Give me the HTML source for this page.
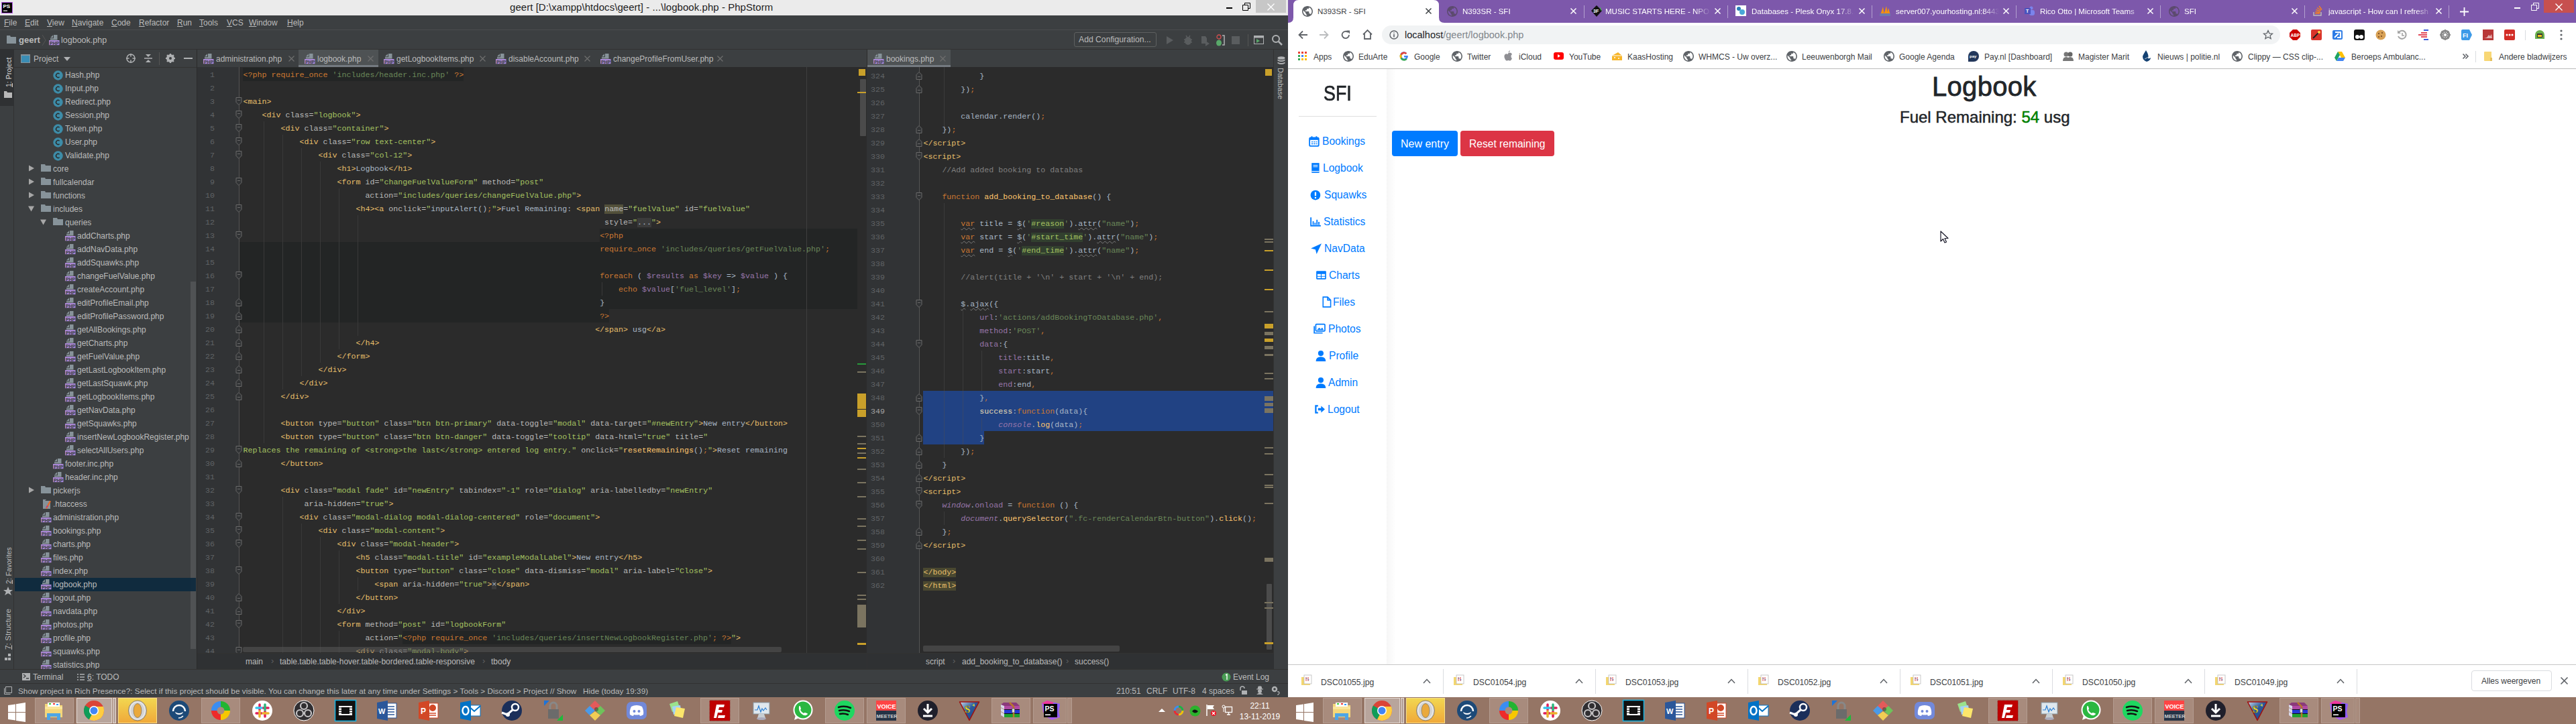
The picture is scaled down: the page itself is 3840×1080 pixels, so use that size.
<!DOCTYPE html><html><head><meta charset="utf-8"><style>
*{margin:0;padding:0}
html,body{width:3840px;height:1080px;overflow:hidden;background:#2b2b2b}
body{position:relative;font-family:"Liberation Sans",sans-serif;font-size:12px}
div{position:absolute}
.t{white-space:pre;line-height:16px}
.tr{white-space:pre;line-height:20px;color:#bbbbbb;font-size:12px}
.ic{position:absolute;overflow:visible}
.lno{font-family:"Liberation Mono",monospace;font-size:11.67px;line-height:20px;color:#606366;text-align:right;white-space:pre}
.cl{font-family:"Liberation Mono",monospace;font-size:11.67px;line-height:20px;color:#a9b7c6;white-space:pre}
.cl span,.cl i{line-height:20px}
.wv{text-decoration:underline wavy #7a7a7a;text-decoration-thickness:1px;text-underline-offset:2px}
.vt{transform-origin:0 0;transform:rotate(-90deg);white-space:pre;line-height:18px;font-size:12px}
.vt2{transform-origin:0 0;transform:rotate(90deg) translate(0,-16px);white-space:pre;line-height:16px;font-size:12px}
u{text-decoration:underline;text-underline-offset:1px}
</style></head><body><svg width="0" height="0" style="position:absolute">
<defs>
<symbol id="phpI" viewBox="0 0 16 16"><path d="M2 4.2L6 0.2V4.2z" fill="#87939a"/><path d="M7 0h5.5v7.5H2V5.2h5z" fill="#87939a"/><rect x="0" y="8" width="15.5" height="7.2" fill="#a987d6"/><text x="0.9" y="14.6" font-family="Liberation Sans" font-weight="bold" font-size="7" fill="#3c3f41" letter-spacing="-0.1">PHP</text></symbol>
<symbol id="clsI" viewBox="0 0 15 15"><circle cx="7.5" cy="7.5" r="7.2" fill="#3d8ca8"/><path d="M9.6 5.3a3 3 0 1 0 0 4.4" fill="none" stroke="#2b2b2b" stroke-width="1.4"/></symbol>
<symbol id="fldI" viewBox="0 0 15 12"><path d="M0 0h6l1 2h8v9H0z" fill="#87939a"/></symbol>
<symbol id="globeI" viewBox="2 2 20 20"><path d="M12 2C6.48 2 2 6.48 2 12s4.48 10 10 10 10-4.48 10-10S17.52 2 12 2zm-1 17.930c-3.950-.490-7-3.850-7-7.930 0-.620.080-1.210.210-1.790L9 15v1c0 1.100.900 2 2 2v1.930zm6.900-2.540c-.260-.810-1-1.390-1.900-1.390h-1v-3c0-.550-.450-1-1-1H8v-2h2c.550 0 1-.450 1-1V7h2c1.100 0 2-.900 2-2v-.410c2.930 1.190 5 4.060 5 7.410 0 2.080-.800 3.970-2.100 5.390z"/></symbol>
</defs></svg><div style="left:0px;top:0px;width:1920px;height:23px;background:#ebebeb"></div><svg class="ic" style="left:2px;top:3px" width="17" height="17"><rect x="0.5" y="0.5" width="16" height="16" fill="#000" stroke="#b15be3"/><text x="2.5" y="9" font-family="Liberation Sans" font-weight="bold" font-size="8" fill="#fff">PS</text><rect x="3" y="12.5" width="6" height="1.2" fill="#fff"/></svg><div class="t" style="left:760px;top:3px;font-size:15px;color:#1e1e1e;letter-spacing:0.05px">geert [D:\xampp\htdocs\geert] - ...\logbook.php - PhpStorm</div><div style="left:1828px;top:11px;width:9px;height:2px;background:#000"></div><svg class="ic" style="left:1852px;top:4px" width="12" height="12"><path d="M0.5 3.5h8v8h-8z M3.5 3.5v-3h8v8h-3" fill="none" stroke="#000"/></svg><div style="left:1872px;top:0px;width:45px;height:19px;background:#c7c7c7"></div><svg class="ic" style="left:1889px;top:5px" width="11" height="11"><path d="M0.5 0.5l10 10M10.5 0.5l-10 10" stroke="#fff" stroke-width="1.3"/></svg><div style="left:0px;top:23px;width:1920px;height:50px;background:#3c3f41"></div><div class="t" style="left:6px;top:26px;color:#bbbbbb"><u>F</u>ile</div><div class="t" style="left:37px;top:26px;color:#bbbbbb"><u>E</u>dit</div><div class="t" style="left:70px;top:26px;color:#bbbbbb"><u>V</u>iew</div><div class="t" style="left:107px;top:26px;color:#bbbbbb"><u>N</u>avigate</div><div class="t" style="left:166px;top:26px;color:#bbbbbb"><u>C</u>ode</div><div class="t" style="left:207px;top:26px;color:#bbbbbb"><u>R</u>efactor</div><div class="t" style="left:264px;top:26px;color:#bbbbbb"><u>R</u>un</div><div class="t" style="left:297px;top:26px;color:#bbbbbb"><u>T</u>ools</div><div class="t" style="left:338px;top:26px;color:#bbbbbb"><u>V</u>CS</div><div class="t" style="left:371px;top:26px;color:#bbbbbb"><u>W</u>indow</div><div class="t" style="left:428px;top:26px;color:#bbbbbb"><u>H</u>elp</div><div style="left:0px;top:44px;width:1920px;height:1px;background:#4b4d4f"></div><svg class="ic" style="left:10px;top:53px" width="14" height="12"><path d="M0 0h5l1 2h8v10H0z" fill="#87939a"/></svg><div class="t" style="left:28px;top:52px;color:#bbbbbb;font-weight:bold;font-size:13px">geert</div><svg class="ic" style="left:62px;top:51px" width="8" height="18"><path d="M1 1l5 8-5 8" fill="none" stroke="#555" /></svg><svg class="ic" style="left:73px;top:52px" width="16" height="16"><use href="#phpI"/></svg><div class="t" style="left:91px;top:52px;color:#bbbbbb;font-size:12.5px">logbook.php</div><div style="left:1601px;top:48px;width:123px;height:22px;border:1px solid #5e6060;border-radius:3px;box-sizing:border-box"></div><div class="t" style="left:1608px;top:51px;color:#bbbbbb;font-size:12.2px">Add Configuration...</div><svg class="ic" style="left:1737px;top:51px" width="200" height="18"><path d="M2 3l10 6-10 6z" fill="#5a5d5f"/><g transform="translate(28,0)"><ellipse cx="6" cy="10" rx="5" ry="6" fill="#5a5d5f"/><path d="M0 8h12M0 12h12M3 2l2 3M9 2l-2 3" stroke="#5a5d5f" stroke-width="1.5"/></g><g transform="translate(52,0)"><path d="M2 3h6l2 3v8H2z" fill="#5a5d5f"/><path d="M8 10l6 4-6 4z" fill="#5a5d5f"/></g><g transform="translate(75,0)"><circle cx="5" cy="4" r="3" fill="none" stroke="#d64f4f" stroke-width="1.3"/><ellipse cx="5" cy="13" rx="4" ry="4.5" fill="#59a869"/><path d="M10 2h3v14h-3" fill="none" stroke="#afb1b3" stroke-width="1.5"/></g><rect x="99" y="3" width="12" height="12" fill="#5a5d5f"/><rect x="123" y="0" width="1" height="18" fill="#555"/><g transform="translate(132,2)"><rect x="0.5" y="0.5" width="14" height="12" fill="none" stroke="#afb1b3"/><rect x="1" y="1" width="13" height="2.5" fill="#afb1b3"/><path d="M4 5l5 3-5 3z" fill="#59a869"/></g><g transform="translate(159,1)"><circle cx="6" cy="6" r="5" fill="none" stroke="#afb1b3" stroke-width="2"/><path d="M10 10l5 5" stroke="#afb1b3" stroke-width="2.5"/></g></svg><div style="left:0px;top:73px;width:1920px;height:1px;background:#323232"></div><div style="left:0px;top:74px;width:21px;height:924px;background:#3c3f41;border-right:1px solid #323232;box-sizing:border-box"></div><div style="left:0px;top:74px;width:21px;height:84px;background:#2f3133"></div><div class="t vt" style="left:4px;top:130px;color:#d6d6d6;font-size:10.5px"><u>1</u>: Project</div><svg class="ic" style="left:6px;top:136px" width="12" height="10"><path d="M0 0h4l1 2h7v8H0z" fill="#b8b8b8"/></svg><div class="t vt" style="left:4px;top:871px;color:#bbbbbb;font-size:10.5px"><u>2</u>: Favorites</div><svg class="ic" style="left:5px;top:875px" width="14" height="14"><path d="M7 0l2 5h5l-4 3 2 5-5-3-5 3 2-5-4-3h5z" fill="#afb1b3"/></svg><div class="t vt" style="left:3px;top:969px;color:#bbbbbb;font-size:11.8px"><u>7</u>: Structure</div><svg class="ic" style="left:7px;top:975px" width="12" height="12"><rect x="5" y="0" width="4" height="4" fill="#afb1b3"/><rect x="0" y="6" width="4" height="4" fill="#afb1b3"/><rect x="5" y="6" width="4" height="4" fill="#afb1b3"/></svg><div style="left:21px;top:74px;width:272px;height:924px;background:#3c3f41"></div><div style="left:21px;top:100px;width:272px;height:1px;background:#323232"></div><svg class="ic" style="left:31px;top:81px" width="15" height="14"><rect x="0.5" y="0.5" width="13" height="12" fill="#3a8db5" stroke="#87939a"/><rect x="0" y="0" width="14" height="2" fill="#87939a"/></svg><div class="t" style="left:50px;top:80px;color:#bbbbbb;font-size:12px">Project</div><svg class="ic" style="left:95px;top:84px" width="10" height="8"><path d="M0 1h10l-5 6z" fill="#afb1b3"/></svg><svg class="ic" style="left:187px;top:79px" width="16" height="16"><circle cx="8" cy="8" r="6" fill="none" stroke="#afb1b3" stroke-width="1.5"/><path d="M8 1v14M1 8h14" stroke="#afb1b3" stroke-width="1.5"/><circle cx="8" cy="8" r="2.5" fill="#3c3f41"/></svg><svg class="ic" style="left:214px;top:80px" width="14" height="14"><path d="M1 7h12" stroke="#afb1b3" stroke-width="1.5"/><path d="M3 1h8l-4 4z M3 13h8l-4-4z" fill="#afb1b3"/></svg><div style="left:237px;top:78px;width:1px;height:19px;background:#555"></div><svg class="ic" style="left:247px;top:80px" width="14" height="14"><circle cx="7" cy="7" r="4.5" fill="none" stroke="#afb1b3" stroke-width="3"/><path d="M7 0v14M0 7h14M2 2l10 10M12 2l-10 10" stroke="#afb1b3" stroke-width="2.2"/><circle cx="7" cy="7" r="2" fill="#3c3f41"/></svg><div style="left:274px;top:86px;width:13px;height:2px;background:#afb1b3"></div><div style="left:284px;top:420px;width:8px;height:548px;background:#505254"></div><div style="left:21px;top:101px;width:272px;height:897px;overflow:hidden"><div style="left:-21px;top:-101px;width:300px;height:1000px"><svg class="ic" style="left:79px;top:105px" width="15" height="15"><use href="#clsI"/></svg><div class="tr" style="left:97px;top:102px;">Hash.php</div><svg class="ic" style="left:79px;top:125px" width="15" height="15"><use href="#clsI"/></svg><div class="tr" style="left:97px;top:122px;">Input.php</div><svg class="ic" style="left:79px;top:145px" width="15" height="15"><use href="#clsI"/></svg><div class="tr" style="left:97px;top:142px;">Redirect.php</div><svg class="ic" style="left:79px;top:165px" width="15" height="15"><use href="#clsI"/></svg><div class="tr" style="left:97px;top:162px;">Session.php</div><svg class="ic" style="left:79px;top:185px" width="15" height="15"><use href="#clsI"/></svg><div class="tr" style="left:97px;top:182px;">Token.php</div><svg class="ic" style="left:79px;top:205px" width="15" height="15"><use href="#clsI"/></svg><div class="tr" style="left:97px;top:202px;">User.php</div><svg class="ic" style="left:79px;top:225px" width="15" height="15"><use href="#clsI"/></svg><div class="tr" style="left:97px;top:222px;">Validate.php</div><svg class="ic" style="left:42px;top:246px" width="10" height="10"><path d="M1 0.5v9l8-4.5z" fill="#a7a7a7"/></svg><svg class="ic" style="left:61px;top:245px" width="15" height="12"><use href="#fldI"/></svg><div class="tr" style="left:79px;top:242px;">core</div><svg class="ic" style="left:42px;top:266px" width="10" height="10"><path d="M1 0.5v9l8-4.5z" fill="#a7a7a7"/></svg><svg class="ic" style="left:61px;top:265px" width="15" height="12"><use href="#fldI"/></svg><div class="tr" style="left:79px;top:262px;">fullcalendar</div><svg class="ic" style="left:42px;top:286px" width="10" height="10"><path d="M1 0.5v9l8-4.5z" fill="#a7a7a7"/></svg><svg class="ic" style="left:61px;top:285px" width="15" height="12"><use href="#fldI"/></svg><div class="tr" style="left:79px;top:282px;">functions</div><svg class="ic" style="left:42px;top:306px" width="10" height="10"><path d="M0 1.5h9l-4.5 8z" fill="#a7a7a7"/></svg><svg class="ic" style="left:61px;top:305px" width="15" height="12"><use href="#fldI"/></svg><div class="tr" style="left:79px;top:302px;">includes</div><svg class="ic" style="left:60px;top:326px" width="10" height="10"><path d="M0 1.5h9l-4.5 8z" fill="#a7a7a7"/></svg><svg class="ic" style="left:79px;top:325px" width="15" height="12"><use href="#fldI"/></svg><div class="tr" style="left:97px;top:322px;">queries</div><svg class="ic" style="left:97px;top:344px" width="16" height="16"><use href="#phpI"/></svg><div class="tr" style="left:115px;top:342px;">addCharts.php</div><svg class="ic" style="left:97px;top:364px" width="16" height="16"><use href="#phpI"/></svg><div class="tr" style="left:115px;top:362px;">addNavData.php</div><svg class="ic" style="left:97px;top:384px" width="16" height="16"><use href="#phpI"/></svg><div class="tr" style="left:115px;top:382px;">addSquawks.php</div><svg class="ic" style="left:97px;top:404px" width="16" height="16"><use href="#phpI"/></svg><div class="tr" style="left:115px;top:402px;">changeFuelValue.php</div><svg class="ic" style="left:97px;top:424px" width="16" height="16"><use href="#phpI"/></svg><div class="tr" style="left:115px;top:422px;">createAccount.php</div><svg class="ic" style="left:97px;top:444px" width="16" height="16"><use href="#phpI"/></svg><div class="tr" style="left:115px;top:442px;">editProfileEmail.php</div><svg class="ic" style="left:97px;top:464px" width="16" height="16"><use href="#phpI"/></svg><div class="tr" style="left:115px;top:462px;">editProfilePassword.php</div><svg class="ic" style="left:97px;top:484px" width="16" height="16"><use href="#phpI"/></svg><div class="tr" style="left:115px;top:482px;">getAllBookings.php</div><svg class="ic" style="left:97px;top:504px" width="16" height="16"><use href="#phpI"/></svg><div class="tr" style="left:115px;top:502px;">getCharts.php</div><svg class="ic" style="left:97px;top:524px" width="16" height="16"><use href="#phpI"/></svg><div class="tr" style="left:115px;top:522px;">getFuelValue.php</div><svg class="ic" style="left:97px;top:544px" width="16" height="16"><use href="#phpI"/></svg><div class="tr" style="left:115px;top:542px;">getLastLogbookItem.php</div><svg class="ic" style="left:97px;top:564px" width="16" height="16"><use href="#phpI"/></svg><div class="tr" style="left:115px;top:562px;">getLastSquawk.php</div><svg class="ic" style="left:97px;top:584px" width="16" height="16"><use href="#phpI"/></svg><div class="tr" style="left:115px;top:582px;">getLogbookItems.php</div><svg class="ic" style="left:97px;top:604px" width="16" height="16"><use href="#phpI"/></svg><div class="tr" style="left:115px;top:602px;">getNavData.php</div><svg class="ic" style="left:97px;top:624px" width="16" height="16"><use href="#phpI"/></svg><div class="tr" style="left:115px;top:622px;">getSquawks.php</div><svg class="ic" style="left:97px;top:644px" width="16" height="16"><use href="#phpI"/></svg><div class="tr" style="left:115px;top:642px;">insertNewLogbookRegister.php</div><svg class="ic" style="left:97px;top:664px" width="16" height="16"><use href="#phpI"/></svg><div class="tr" style="left:115px;top:662px;">selectAllUsers.php</div><svg class="ic" style="left:79px;top:684px" width="16" height="16"><use href="#phpI"/></svg><div class="tr" style="left:97px;top:682px;">footer.inc.php</div><svg class="ic" style="left:79px;top:704px" width="16" height="16"><use href="#phpI"/></svg><div class="tr" style="left:97px;top:702px;">header.inc.php</div><svg class="ic" style="left:42px;top:726px" width="10" height="10"><path d="M1 0.5v9l8-4.5z" fill="#a7a7a7"/></svg><svg class="ic" style="left:61px;top:725px" width="15" height="12"><use href="#fldI"/></svg><div class="tr" style="left:79px;top:722px;">pickerjs</div><svg class="ic" style="left:62px;top:744px" width="15" height="16"><path d="M2 3h11v12H2z" fill="#87939a"/><path d="M2 1h5l-5 5z" fill="#87939a"/><path d="M6 14l6-11 2 1-6 11z" fill="#e86a2a"/><path d="M6 14l2-4 2 1z" fill="#a53a9a"/></svg><div class="tr" style="left:79px;top:742px;">.htaccess</div><svg class="ic" style="left:61px;top:764px" width="16" height="16"><use href="#phpI"/></svg><div class="tr" style="left:79px;top:762px;">administration.php</div><svg class="ic" style="left:61px;top:784px" width="16" height="16"><use href="#phpI"/></svg><div class="tr" style="left:79px;top:782px;">bookings.php</div><svg class="ic" style="left:61px;top:804px" width="16" height="16"><use href="#phpI"/></svg><div class="tr" style="left:79px;top:802px;">charts.php</div><svg class="ic" style="left:61px;top:824px" width="16" height="16"><use href="#phpI"/></svg><div class="tr" style="left:79px;top:822px;">files.php</div><svg class="ic" style="left:61px;top:844px" width="16" height="16"><use href="#phpI"/></svg><div class="tr" style="left:79px;top:842px;">index.php</div><div style="left:22px;top:862px;width:270px;height:20px;background:rgba(13,41,62,0.92)"></div><svg class="ic" style="left:61px;top:864px" width="16" height="16"><use href="#phpI"/></svg><div class="tr" style="left:79px;top:862px;">logbook.php</div><svg class="ic" style="left:61px;top:884px" width="16" height="16"><use href="#phpI"/></svg><div class="tr" style="left:79px;top:882px;">logout.php</div><svg class="ic" style="left:61px;top:904px" width="16" height="16"><use href="#phpI"/></svg><div class="tr" style="left:79px;top:902px;">navdata.php</div><svg class="ic" style="left:61px;top:924px" width="16" height="16"><use href="#phpI"/></svg><div class="tr" style="left:79px;top:922px;">photos.php</div><svg class="ic" style="left:61px;top:944px" width="16" height="16"><use href="#phpI"/></svg><div class="tr" style="left:79px;top:942px;">profile.php</div><svg class="ic" style="left:61px;top:964px" width="16" height="16"><use href="#phpI"/></svg><div class="tr" style="left:79px;top:962px;">squawks.php</div><svg class="ic" style="left:61px;top:984px" width="16" height="16"><use href="#phpI"/></svg><div class="tr" style="left:79px;top:982px;">statistics.php</div></div></div><div style="left:293px;top:74px;width:1px;height:924px;background:#2b2b2b"></div><div style="left:294px;top:74px;width:998px;height:26px;background:#3c3f41"></div><div style="left:445px;top:74px;width:119px;height:26px;background:#4e5254"></div><div style="left:445px;top:97px;width:119px;height:3px;background:#747a80"></div><svg class="ic" style="left:303px;top:80px" width="16" height="16"><use href="#phpI"/></svg><div class="t" style="left:322px;top:80px;color:#bbbbbb">administration.php</div><svg class="ic" style="left:430px;top:83px" width="9" height="9"><path d="M0.5 0.5l8 8M8.5 0.5l-8 8" stroke="#6e6e6e" stroke-width="1.2"/></svg><svg class="ic" style="left:454px;top:80px" width="16" height="16"><use href="#phpI"/></svg><div class="t" style="left:473px;top:80px;color:#bbbbbb">logbook.php</div><svg class="ic" style="left:548px;top:83px" width="9" height="9"><path d="M0.5 0.5l8 8M8.5 0.5l-8 8" stroke="#6e6e6e" stroke-width="1.2"/></svg><svg class="ic" style="left:572px;top:80px" width="16" height="16"><use href="#phpI"/></svg><div class="t" style="left:591px;top:80px;color:#bbbbbb">getLogbookItems.php</div><svg class="ic" style="left:715px;top:83px" width="9" height="9"><path d="M0.5 0.5l8 8M8.5 0.5l-8 8" stroke="#6e6e6e" stroke-width="1.2"/></svg><svg class="ic" style="left:739px;top:80px" width="16" height="16"><use href="#phpI"/></svg><div class="t" style="left:758px;top:80px;color:#bbbbbb">disableAccount.php</div><svg class="ic" style="left:871px;top:83px" width="9" height="9"><path d="M0.5 0.5l8 8M8.5 0.5l-8 8" stroke="#6e6e6e" stroke-width="1.2"/></svg><svg class="ic" style="left:895px;top:80px" width="16" height="16"><use href="#phpI"/></svg><div class="t" style="left:914px;top:80px;color:#bbbbbb">changeProfileFromUser.php</div><svg class="ic" style="left:1069px;top:83px" width="9" height="9"><path d="M0.5 0.5l8 8M8.5 0.5l-8 8" stroke="#6e6e6e" stroke-width="1.2"/></svg><div style="left:294px;top:100px;width:998px;height:874px;background:#2b2b2b"></div><div style="left:294px;top:100px;width:63px;height:874px;background:#313335"></div><div style="left:356px;top:100px;width:1px;height:874px;background:#555555"></div><div style="left:362px;top:101px;width:329px;height:20px;background:#232525"></div><div style="left:894px;top:341px;width:384px;height:20px;background:#232525"></div><div style="left:357px;top:361px;width:921px;height:100px;background:#232525"></div><div style="left:357px;top:461px;width:551px;height:20px;background:#232525"></div><div style="left:600px;top:941px;width:490px;height:20px;background:#232525"></div><div style="left:1202px;top:100px;width:1px;height:874px;background:#3f3f3f"></div><div style="left:393px;top:181px;width:1px;height:480px;background:#393939"></div><div style="left:421px;top:201px;width:1px;height:380px;background:#393939"></div><div style="left:421px;top:741px;width:1px;height:240px;background:#393939"></div><div style="left:449px;top:221px;width:1px;height:340px;background:#393939"></div><div style="left:449px;top:781px;width:1px;height:200px;background:#393939"></div><div style="left:477px;top:241px;width:1px;height:300px;background:#393939"></div><div style="left:477px;top:801px;width:1px;height:180px;background:#393939"></div><div style="left:505px;top:281px;width:1px;height:240px;background:#393939"></div><div style="left:505px;top:821px;width:1px;height:80px;background:#393939"></div><div style="left:505px;top:941px;width:1px;height:40px;background:#393939"></div><div style="left:533px;top:321px;width:1px;height:180px;background:#393939"></div><div style="left:533px;top:861px;width:1px;height:20px;background:#393939"></div><div style="left:897px;top:421px;width:1px;height:20px;background:#393939"></div><svg class="ic" style="left:351px;top:144px" width="11" height="14"><path d="M1 1.5h8v7l-4 4-4-4z" fill="#313335" stroke="#6a6a6a"/><path d="M3 5.5h4" stroke="#6a6a6a"/></svg><svg class="ic" style="left:351px;top:164px" width="11" height="14"><path d="M1 1.5h8v7l-4 4-4-4z" fill="#313335" stroke="#6a6a6a"/><path d="M3 5.5h4" stroke="#6a6a6a"/></svg><svg class="ic" style="left:351px;top:184px" width="11" height="14"><path d="M1 1.5h8v7l-4 4-4-4z" fill="#313335" stroke="#6a6a6a"/><path d="M3 5.5h4" stroke="#6a6a6a"/></svg><svg class="ic" style="left:351px;top:204px" width="11" height="14"><path d="M1 1.5h8v7l-4 4-4-4z" fill="#313335" stroke="#6a6a6a"/><path d="M3 5.5h4" stroke="#6a6a6a"/></svg><svg class="ic" style="left:351px;top:224px" width="11" height="14"><path d="M1 1.5h8v7l-4 4-4-4z" fill="#313335" stroke="#6a6a6a"/><path d="M3 5.5h4" stroke="#6a6a6a"/></svg><svg class="ic" style="left:351px;top:264px" width="11" height="14"><path d="M1 1.5h8v7l-4 4-4-4z" fill="#313335" stroke="#6a6a6a"/><path d="M3 5.5h4" stroke="#6a6a6a"/></svg><svg class="ic" style="left:351px;top:304px" width="11" height="14"><path d="M1 1.5h8v7l-4 4-4-4z" fill="#313335" stroke="#6a6a6a"/><path d="M3 5.5h4" stroke="#6a6a6a"/></svg><svg class="ic" style="left:351px;top:344px" width="11" height="14"><path d="M1 1.5h8v7l-4 4-4-4z" fill="#313335" stroke="#6a6a6a"/><path d="M3 5.5h4" stroke="#6a6a6a"/></svg><svg class="ic" style="left:351px;top:404px" width="11" height="14"><path d="M1 1.5h8v7l-4 4-4-4z" fill="#313335" stroke="#6a6a6a"/><path d="M3 5.5h4" stroke="#6a6a6a"/></svg><svg class="ic" style="left:351px;top:444px" width="11" height="14"><path d="M1 12.5h8v-7l-4-4-4 4z" fill="#313335" stroke="#6a6a6a"/><path d="M3 8.5h4" stroke="#6a6a6a"/></svg><svg class="ic" style="left:351px;top:464px" width="11" height="14"><path d="M1 12.5h8v-7l-4-4-4 4z" fill="#313335" stroke="#6a6a6a"/><path d="M3 8.5h4" stroke="#6a6a6a"/></svg><svg class="ic" style="left:351px;top:484px" width="11" height="14"><path d="M1 12.5h8v-7l-4-4-4 4z" fill="#313335" stroke="#6a6a6a"/><path d="M3 8.5h4" stroke="#6a6a6a"/></svg><svg class="ic" style="left:351px;top:504px" width="11" height="14"><path d="M1 12.5h8v-7l-4-4-4 4z" fill="#313335" stroke="#6a6a6a"/><path d="M3 8.5h4" stroke="#6a6a6a"/></svg><svg class="ic" style="left:351px;top:524px" width="11" height="14"><path d="M1 12.5h8v-7l-4-4-4 4z" fill="#313335" stroke="#6a6a6a"/><path d="M3 8.5h4" stroke="#6a6a6a"/></svg><svg class="ic" style="left:351px;top:544px" width="11" height="14"><path d="M1 12.5h8v-7l-4-4-4 4z" fill="#313335" stroke="#6a6a6a"/><path d="M3 8.5h4" stroke="#6a6a6a"/></svg><svg class="ic" style="left:351px;top:564px" width="11" height="14"><path d="M1 12.5h8v-7l-4-4-4 4z" fill="#313335" stroke="#6a6a6a"/><path d="M3 8.5h4" stroke="#6a6a6a"/></svg><svg class="ic" style="left:351px;top:584px" width="11" height="14"><path d="M1 12.5h8v-7l-4-4-4 4z" fill="#313335" stroke="#6a6a6a"/><path d="M3 8.5h4" stroke="#6a6a6a"/></svg><svg class="ic" style="left:351px;top:664px" width="11" height="14"><path d="M1 1.5h8v7l-4 4-4-4z" fill="#313335" stroke="#6a6a6a"/><path d="M3 5.5h4" stroke="#6a6a6a"/></svg><svg class="ic" style="left:351px;top:684px" width="11" height="14"><path d="M1 12.5h8v-7l-4-4-4 4z" fill="#313335" stroke="#6a6a6a"/><path d="M3 8.5h4" stroke="#6a6a6a"/></svg><svg class="ic" style="left:351px;top:724px" width="11" height="14"><path d="M1 1.5h8v7l-4 4-4-4z" fill="#313335" stroke="#6a6a6a"/><path d="M3 5.5h4" stroke="#6a6a6a"/></svg><svg class="ic" style="left:351px;top:764px" width="11" height="14"><path d="M1 1.5h8v7l-4 4-4-4z" fill="#313335" stroke="#6a6a6a"/><path d="M3 5.5h4" stroke="#6a6a6a"/></svg><svg class="ic" style="left:351px;top:784px" width="11" height="14"><path d="M1 1.5h8v7l-4 4-4-4z" fill="#313335" stroke="#6a6a6a"/><path d="M3 5.5h4" stroke="#6a6a6a"/></svg><svg class="ic" style="left:351px;top:804px" width="11" height="14"><path d="M1 1.5h8v7l-4 4-4-4z" fill="#313335" stroke="#6a6a6a"/><path d="M3 5.5h4" stroke="#6a6a6a"/></svg><svg class="ic" style="left:351px;top:844px" width="11" height="14"><path d="M1 1.5h8v7l-4 4-4-4z" fill="#313335" stroke="#6a6a6a"/><path d="M3 5.5h4" stroke="#6a6a6a"/></svg><svg class="ic" style="left:351px;top:884px" width="11" height="14"><path d="M1 12.5h8v-7l-4-4-4 4z" fill="#313335" stroke="#6a6a6a"/><path d="M3 8.5h4" stroke="#6a6a6a"/></svg><svg class="ic" style="left:351px;top:904px" width="11" height="14"><path d="M1 12.5h8v-7l-4-4-4 4z" fill="#313335" stroke="#6a6a6a"/><path d="M3 8.5h4" stroke="#6a6a6a"/></svg><svg class="ic" style="left:351px;top:924px" width="11" height="14"><path d="M1 1.5h8v7l-4 4-4-4z" fill="#313335" stroke="#6a6a6a"/><path d="M3 5.5h4" stroke="#6a6a6a"/></svg><svg class="ic" style="left:351px;top:964px" width="11" height="14"><path d="M1 1.5h8v7l-4 4-4-4z" fill="#313335" stroke="#6a6a6a"/><path d="M3 5.5h4" stroke="#6a6a6a"/></svg><div class="lno" style="left:294px;top:102px;width:26px">1</div><div class="cl" style="left:362.5px;top:102px"><span style="color:#cc7832">&lt;?php </span><span style="color:#cc7832">require_once </span><span style="color:#6a8759">'includes/header.inc.php' </span><span style="color:#cc7832">?&gt;</span></div><div class="lno" style="left:294px;top:122px;width:26px">2</div><div class="lno" style="left:294px;top:142px;width:26px">3</div><div class="cl" style="left:362.5px;top:142px"><span style="color:#e8bf6a">&lt;main</span><span style="color:#e8bf6a">&gt;</span></div><div class="lno" style="left:294px;top:162px;width:26px">4</div><div class="cl" style="left:362.5px;top:162px">    <span style="color:#e8bf6a">&lt;div</span><span style="color:#a9b7c6"> </span><span style="color:#bababa">class=</span><span style="color:#a5c261">"logbook"</span><span style="color:#e8bf6a">&gt;</span></div><div class="lno" style="left:294px;top:182px;width:26px">5</div><div class="cl" style="left:362.5px;top:182px">        <span style="color:#e8bf6a">&lt;div</span><span style="color:#a9b7c6"> </span><span style="color:#bababa">class=</span><span style="color:#a5c261">"container"</span><span style="color:#e8bf6a">&gt;</span></div><div class="lno" style="left:294px;top:202px;width:26px">6</div><div class="cl" style="left:362.5px;top:202px">            <span style="color:#e8bf6a">&lt;div</span><span style="color:#a9b7c6"> </span><span style="color:#bababa">class=</span><span style="color:#a5c261">"row text-center"</span><span style="color:#e8bf6a">&gt;</span></div><div class="lno" style="left:294px;top:222px;width:26px">7</div><div class="cl" style="left:362.5px;top:222px">                <span style="color:#e8bf6a">&lt;div</span><span style="color:#a9b7c6"> </span><span style="color:#bababa">class=</span><span style="color:#a5c261">"col-12"</span><span style="color:#e8bf6a">&gt;</span></div><div class="lno" style="left:294px;top:242px;width:26px">8</div><div class="cl" style="left:362.5px;top:242px">                    <span style="color:#e8bf6a">&lt;h1&gt;</span><span style="color:#a9b7c6">Logbook</span><span style="color:#e8bf6a">&lt;/h1&gt;</span></div><div class="lno" style="left:294px;top:262px;width:26px">9</div><div class="cl" style="left:362.5px;top:262px">                    <span style="color:#e8bf6a">&lt;form</span><span style="color:#a9b7c6"> </span><span style="color:#bababa">id=</span><span style="color:#a5c261">"changeFuelValueForm"</span><span style="color:#a9b7c6"> </span><span style="color:#bababa">method=</span><span style="color:#a5c261">"post"</span></div><div class="lno" style="left:294px;top:282px;width:26px">10</div><div class="cl" style="left:362.5px;top:282px">                          <span style="color:#bababa">action=</span><span style="color:#a5c261">"includes/queries/changeFuelValue.php"</span><span style="color:#e8bf6a">&gt;</span></div><div class="lno" style="left:294px;top:302px;width:26px">11</div><div class="cl" style="left:362.5px;top:302px">                        <span style="color:#e8bf6a">&lt;h4&gt;&lt;a </span><span style="color:#bababa">onclick=</span><span style="color:#a5c261">"</span><span style="color:#a9b7c6">inputAlert()</span><span style="color:#cc7832">;</span><span style="color:#a5c261">"</span><span style="color:#e8bf6a">&gt;</span><span style="color:#a9b7c6">Fuel Remaining: </span><span style="color:#e8bf6a">&lt;span </span><span style="color:#bababa;background:#52503a">name</span><span style="color:#bababa">=</span><span style="color:#a5c261">"fuelValue" </span><span style="color:#bababa">id=</span><span style="color:#a5c261">"fuelValue"</span></div><div class="lno" style="left:294px;top:322px;width:26px">12</div><div class="cl" style="left:362.5px;top:322px">                                                                             <span style="color:#bababa">style=</span><span style="color:#a5c261">"</span><span style="color:#a9b7c6;background:#3b3b3b">...</span><span style="color:#a5c261">"</span><span style="color:#e8bf6a">&gt;</span></div><div class="lno" style="left:294px;top:342px;width:26px">13</div><div class="cl" style="left:362.5px;top:342px">                                                                            <span style="color:#cc7832">&lt;?php</span></div><div class="lno" style="left:294px;top:362px;width:26px">14</div><div class="cl" style="left:362.5px;top:362px">                                                                            <span style="color:#cc7832">require_once </span><span style="color:#6a8759">'includes/queries/getFuelValue.php'</span><span style="color:#cc7832">;</span></div><div class="lno" style="left:294px;top:382px;width:26px">15</div><div class="lno" style="left:294px;top:402px;width:26px">16</div><div class="cl" style="left:362.5px;top:402px">                                                                            <span style="color:#cc7832">foreach </span><span style="color:#a9b7c6">( </span><span style="color:#9876aa">$results </span><span style="color:#cc7832">as </span><span style="color:#9876aa">$key </span><span style="color:#a9b7c6">=&gt; </span><span style="color:#9876aa">$value </span><span style="color:#a9b7c6">) {</span></div><div class="lno" style="left:294px;top:422px;width:26px">17</div><div class="cl" style="left:362.5px;top:422px">                                                                                <span style="color:#cc7832">echo </span><span style="color:#9876aa">$value</span><span style="color:#a9b7c6">[</span><span style="color:#6a8759">'fuel_level'</span><span style="color:#a9b7c6">]</span><span style="color:#cc7832">;</span></div><div class="lno" style="left:294px;top:442px;width:26px">18</div><div class="cl" style="left:362.5px;top:442px">                                                                            <span style="color:#a9b7c6">}</span></div><div class="lno" style="left:294px;top:462px;width:26px">19</div><div class="cl" style="left:362.5px;top:462px">                                                                            <span style="color:#cc7832">?&gt;</span></div><div class="lno" style="left:294px;top:482px;width:26px">20</div><div class="cl" style="left:362.5px;top:482px">                                                                           <span style="color:#e8bf6a">&lt;/span&gt;</span><span style="color:#a9b7c6"> usg</span><span style="color:#e8bf6a">&lt;/a&gt;</span></div><div class="lno" style="left:294px;top:502px;width:26px">21</div><div class="cl" style="left:362.5px;top:502px">                        <span style="color:#e8bf6a">&lt;/h4</span><span style="color:#e8bf6a">&gt;</span></div><div class="lno" style="left:294px;top:522px;width:26px">22</div><div class="cl" style="left:362.5px;top:522px">                    <span style="color:#e8bf6a">&lt;/form</span><span style="color:#e8bf6a">&gt;</span></div><div class="lno" style="left:294px;top:542px;width:26px">23</div><div class="cl" style="left:362.5px;top:542px">                <span style="color:#e8bf6a">&lt;/div</span><span style="color:#e8bf6a">&gt;</span></div><div class="lno" style="left:294px;top:562px;width:26px">24</div><div class="cl" style="left:362.5px;top:562px">            <span style="color:#e8bf6a">&lt;/div</span><span style="color:#e8bf6a">&gt;</span></div><div class="lno" style="left:294px;top:582px;width:26px">25</div><div class="cl" style="left:362.5px;top:582px">        <span style="color:#e8bf6a">&lt;/div</span><span style="color:#e8bf6a">&gt;</span></div><div class="lno" style="left:294px;top:602px;width:26px">26</div><div class="lno" style="left:294px;top:622px;width:26px">27</div><div class="cl" style="left:362.5px;top:622px">        <span style="color:#e8bf6a">&lt;button </span><span style="color:#bababa">type=</span><span style="color:#a5c261">"button" </span><span style="color:#bababa">class=</span><span style="color:#a5c261">"btn btn-primary" </span><span style="color:#bababa">data-toggle=</span><span style="color:#a5c261">"modal" </span><span style="color:#bababa">data-target=</span><span style="color:#a5c261">"#newEntry"</span><span style="color:#e8bf6a">&gt;</span><span style="color:#a9b7c6">New entry</span><span style="color:#e8bf6a">&lt;/button&gt;</span></div><div class="lno" style="left:294px;top:642px;width:26px">28</div><div class="cl" style="left:362.5px;top:642px">        <span style="color:#e8bf6a">&lt;button</span><span style="color:#a9b7c6"> </span><span style="color:#bababa">type=</span><span style="color:#a5c261">"button"</span><span style="color:#a9b7c6"> </span><span style="color:#bababa">class=</span><span style="color:#a5c261">"btn btn-danger"</span><span style="color:#a9b7c6"> </span><span style="color:#bababa">data-toggle=</span><span style="color:#a5c261">"tooltip"</span><span style="color:#a9b7c6"> </span><span style="color:#bababa">data-html=</span><span style="color:#a5c261">"true"</span><span style="color:#a9b7c6"> </span><span style="color:#bababa">title=</span><span style="color:#a5c261">"</span></div><div class="lno" style="left:294px;top:662px;width:26px">29</div><div class="cl" style="left:362.5px;top:662px"><span style="color:#a5c261">Replaces the remaining of &lt;strong&gt;the last&lt;/strong&gt; entered log entry." </span><span style="color:#bababa">onclick=</span><span style="color:#a5c261">"</span><span style="color:#ffc66d">resetRemainings</span><span style="color:#a9b7c6">()</span><span style="color:#cc7832">;</span><span style="color:#a5c261">"</span><span style="color:#e8bf6a">&gt;</span><span style="color:#a9b7c6">Reset remaining</span></div><div class="lno" style="left:294px;top:682px;width:26px">30</div><div class="cl" style="left:362.5px;top:682px">        <span style="color:#e8bf6a">&lt;/button</span><span style="color:#e8bf6a">&gt;</span></div><div class="lno" style="left:294px;top:702px;width:26px">31</div><div class="lno" style="left:294px;top:722px;width:26px">32</div><div class="cl" style="left:362.5px;top:722px">        <span style="color:#e8bf6a">&lt;div</span><span style="color:#a9b7c6"> </span><span style="color:#bababa">class=</span><span style="color:#a5c261">"modal fade"</span><span style="color:#a9b7c6"> </span><span style="color:#bababa">id=</span><span style="color:#a5c261">"newEntry"</span><span style="color:#a9b7c6"> </span><span style="color:#bababa">tabindex=</span><span style="color:#a5c261">"-1"</span><span style="color:#a9b7c6"> </span><span style="color:#bababa">role=</span><span style="color:#a5c261">"dialog"</span><span style="color:#a9b7c6"> </span><span style="color:#bababa">aria-labelledby=</span><span style="color:#a5c261">"newEntry"</span></div><div class="lno" style="left:294px;top:742px;width:26px">33</div><div class="cl" style="left:362.5px;top:742px">             <span style="color:#bababa">aria-hidden=</span><span style="color:#a5c261">"true"</span><span style="color:#e8bf6a">&gt;</span></div><div class="lno" style="left:294px;top:762px;width:26px">34</div><div class="cl" style="left:362.5px;top:762px">            <span style="color:#e8bf6a">&lt;div</span><span style="color:#a9b7c6"> </span><span style="color:#bababa">class=</span><span style="color:#a5c261">"modal-dialog modal-dialog-centered"</span><span style="color:#a9b7c6"> </span><span style="color:#bababa">role=</span><span style="color:#a5c261">"document"</span><span style="color:#e8bf6a">&gt;</span></div><div class="lno" style="left:294px;top:782px;width:26px">35</div><div class="cl" style="left:362.5px;top:782px">                <span style="color:#e8bf6a">&lt;div</span><span style="color:#a9b7c6"> </span><span style="color:#bababa">class=</span><span style="color:#a5c261">"modal-content"</span><span style="color:#e8bf6a">&gt;</span></div><div class="lno" style="left:294px;top:802px;width:26px">36</div><div class="cl" style="left:362.5px;top:802px">                    <span style="color:#e8bf6a">&lt;div</span><span style="color:#a9b7c6"> </span><span style="color:#bababa">class=</span><span style="color:#a5c261">"modal-header"</span><span style="color:#e8bf6a">&gt;</span></div><div class="lno" style="left:294px;top:822px;width:26px">37</div><div class="cl" style="left:362.5px;top:822px">                        <span style="color:#e8bf6a">&lt;h5 </span><span style="color:#bababa">class=</span><span style="color:#a5c261">"modal-title" </span><span style="color:#bababa">id=</span><span style="color:#a5c261">"exampleModalLabel"</span><span style="color:#e8bf6a">&gt;</span><span style="color:#a9b7c6">New entry</span><span style="color:#e8bf6a">&lt;/h5&gt;</span></div><div class="lno" style="left:294px;top:842px;width:26px">38</div><div class="cl" style="left:362.5px;top:842px">                        <span style="color:#e8bf6a">&lt;button</span><span style="color:#a9b7c6"> </span><span style="color:#bababa">type=</span><span style="color:#a5c261">"button"</span><span style="color:#a9b7c6"> </span><span style="color:#bababa">class=</span><span style="color:#a5c261">"close"</span><span style="color:#a9b7c6"> </span><span style="color:#bababa">data-dismiss=</span><span style="color:#a5c261">"modal"</span><span style="color:#a9b7c6"> </span><span style="color:#bababa">aria-label=</span><span style="color:#a5c261">"Close"</span><span style="color:#e8bf6a">&gt;</span></div><div class="lno" style="left:294px;top:862px;width:26px">39</div><div class="cl" style="left:362.5px;top:862px">                            <span style="color:#e8bf6a">&lt;span </span><span style="color:#bababa">aria-hidden=</span><span style="color:#a5c261">"true"</span><span style="color:#e8bf6a">&gt;</span><span style="color:#a9b7c6;background:#3b3b3b">×</span><span style="color:#e8bf6a">&lt;/span&gt;</span></div><div class="lno" style="left:294px;top:882px;width:26px">40</div><div class="cl" style="left:362.5px;top:882px">                        <span style="color:#e8bf6a">&lt;/button</span><span style="color:#e8bf6a">&gt;</span></div><div class="lno" style="left:294px;top:902px;width:26px">41</div><div class="cl" style="left:362.5px;top:902px">                    <span style="color:#e8bf6a">&lt;/div</span><span style="color:#e8bf6a">&gt;</span></div><div class="lno" style="left:294px;top:922px;width:26px">42</div><div class="cl" style="left:362.5px;top:922px">                    <span style="color:#e8bf6a">&lt;form</span><span style="color:#a9b7c6"> </span><span style="color:#bababa">method=</span><span style="color:#a5c261">"post"</span><span style="color:#a9b7c6"> </span><span style="color:#bababa">id=</span><span style="color:#a5c261">"logbookForm"</span></div><div class="lno" style="left:294px;top:942px;width:26px">43</div><div class="cl" style="left:362.5px;top:942px">                          <span style="color:#bababa">action=</span><span style="color:#a5c261">"</span><span style="color:#cc7832">&lt;?php </span><span style="color:#cc7832">require_once </span><span style="color:#6a8759">'includes/queries/insertNewLogbookRegister.php'</span><span style="color:#cc7832">; ?&gt;</span><span style="color:#a5c261">"</span><span style="color:#e8bf6a">&gt;</span></div><div class="lno" style="left:294px;top:962px;width:26px">44</div><div class="cl" style="left:362.5px;top:962px">                        <span style="color:#e8bf6a">&lt;div</span><span style="color:#a9b7c6"> </span><span style="color:#bababa">class=</span><span style="color:#a5c261">"modal-body"</span><span style="color:#e8bf6a">&gt;</span></div><div style="left:362px;top:965px;width:803px;height:8px;background:rgba(90,90,90,0.55);border-radius:2px"></div><div style="left:1278px;top:100px;width:14px;height:874px;background:#2b2b2b"></div><div style="left:1282px;top:118px;width:9px;height:85px;background:#4b4b4b;border-radius:1px"></div><div style="left:1280px;top:103px;width:10px;height:10px;background:#c9a02a"></div><div style="left:1278px;top:137px;width:13px;height:2px;background:#c9a02a"></div><div style="left:1278px;top:542px;width:13px;height:2px;background:#279a3b"></div><div style="left:1278px;top:554px;width:13px;height:2px;background:#7b7460"></div><div style="left:1278px;top:587px;width:13px;height:23px;background:#c9a02a"></div><div style="left:1278px;top:611px;width:13px;height:11px;background:#c9a02a"></div><div style="left:1278px;top:650px;width:13px;height:2px;background:#7b7460"></div><div style="left:1278px;top:661px;width:13px;height:2px;background:#7b7460"></div><div style="left:1278px;top:668px;width:13px;height:2px;background:#c9a02a"></div><div style="left:1278px;top:675px;width:13px;height:2px;background:#7b7460"></div><div style="left:1278px;top:682px;width:13px;height:2px;background:#c9a02a"></div><div style="left:1278px;top:699px;width:13px;height:2px;background:#7b7460"></div><div style="left:1278px;top:719px;width:13px;height:2px;background:#7b7460"></div><div style="left:1278px;top:740px;width:13px;height:2px;background:#7b7460"></div><div style="left:1278px;top:773px;width:13px;height:2px;background:#7b7460"></div><div style="left:1278px;top:784px;width:13px;height:2px;background:#7b7460"></div><div style="left:1278px;top:805px;width:13px;height:2px;background:#7b7460"></div><div style="left:1278px;top:818px;width:13px;height:2px;background:#7b7460"></div><div style="left:1278px;top:853px;width:13px;height:2px;background:#7b7460"></div><div style="left:1278px;top:887px;width:13px;height:2px;background:#7b7460"></div><div style="left:1278px;top:893px;width:13px;height:2px;background:#7b7460"></div><div style="left:1278px;top:902px;width:13px;height:34px;background:#7b7460"></div><div style="left:1278px;top:959px;width:13px;height:3px;background:#c9a02a"></div><div style="left:1292px;top:74px;width:607px;height:26px;background:#3c3f41;border-left:1px solid #2b2b2b;box-sizing:border-box"></div><div style="left:1293px;top:74px;width:124px;height:26px;background:#4e5254"></div><div style="left:1293px;top:97px;width:124px;height:3px;background:#747a80"></div><svg class="ic" style="left:1302px;top:80px" width="16" height="16"><use href="#phpI"/></svg><div class="t" style="left:1321px;top:80px;color:#bbbbbb">bookings.php</div><svg class="ic" style="left:1401px;top:83px" width="9" height="9"><path d="M0.5 0.5l8 8M8.5 0.5l-8 8" stroke="#6e6e6e" stroke-width="1.2"/></svg><div style="left:1292px;top:100px;width:607px;height:874px;background:#2b2b2b"></div><div style="left:1292px;top:100px;width:79px;height:874px;background:#313335"></div><div style="left:1370px;top:100px;width:1px;height:874px;background:#555555"></div><div style="left:1376px;top:583px;width:522px;height:60px;background:#214283"></div><div style="left:1376px;top:643px;width:91px;height:20px;background:#214283"></div><div style="left:1407px;top:100px;width:1px;height:96px;background:rgba(80,80,80,0.45)"></div><div style="left:1407px;top:303px;width:1px;height:380px;background:rgba(80,80,80,0.45)"></div><div style="left:1435px;top:463px;width:1px;height:200px;background:rgba(80,80,80,0.45)"></div><div style="left:1463px;top:523px;width:1px;height:60px;background:rgba(80,80,80,0.45)"></div><div style="left:1463px;top:623px;width:1px;height:20px;background:rgba(80,80,80,0.45)"></div><div style="left:1407px;top:763px;width:1px;height:20px;background:rgba(80,80,80,0.45)"></div><svg class="ic" style="left:1365px;top:106px" width="11" height="14"><path d="M1 12.5h8v-7l-4-4-4 4z" fill="#313335" stroke="#6a6a6a"/><path d="M3 8.5h4" stroke="#6a6a6a"/></svg><svg class="ic" style="left:1365px;top:126px" width="11" height="14"><path d="M1 12.5h8v-7l-4-4-4 4z" fill="#313335" stroke="#6a6a6a"/><path d="M3 8.5h4" stroke="#6a6a6a"/></svg><svg class="ic" style="left:1365px;top:186px" width="11" height="14"><path d="M1 12.5h8v-7l-4-4-4 4z" fill="#313335" stroke="#6a6a6a"/><path d="M3 8.5h4" stroke="#6a6a6a"/></svg><svg class="ic" style="left:1365px;top:206px" width="11" height="14"><path d="M1 12.5h8v-7l-4-4-4 4z" fill="#313335" stroke="#6a6a6a"/><path d="M3 8.5h4" stroke="#6a6a6a"/></svg><svg class="ic" style="left:1365px;top:226px" width="11" height="14"><path d="M1 1.5h8v7l-4 4-4-4z" fill="#313335" stroke="#6a6a6a"/><path d="M3 5.5h4" stroke="#6a6a6a"/></svg><svg class="ic" style="left:1365px;top:286px" width="11" height="14"><path d="M1 1.5h8v7l-4 4-4-4z" fill="#313335" stroke="#6a6a6a"/><path d="M3 5.5h4" stroke="#6a6a6a"/></svg><svg class="ic" style="left:1365px;top:446px" width="11" height="14"><path d="M1 1.5h8v7l-4 4-4-4z" fill="#313335" stroke="#6a6a6a"/><path d="M3 5.5h4" stroke="#6a6a6a"/></svg><svg class="ic" style="left:1365px;top:506px" width="11" height="14"><path d="M1 1.5h8v7l-4 4-4-4z" fill="#313335" stroke="#6a6a6a"/><path d="M3 5.5h4" stroke="#6a6a6a"/></svg><svg class="ic" style="left:1365px;top:586px" width="11" height="14"><path d="M1 12.5h8v-7l-4-4-4 4z" fill="#313335" stroke="#6a6a6a"/><path d="M3 8.5h4" stroke="#6a6a6a"/></svg><svg class="ic" style="left:1365px;top:606px" width="11" height="14"><path d="M1 1.5h8v7l-4 4-4-4z" fill="#313335" stroke="#6a6a6a"/><path d="M3 5.5h4" stroke="#6a6a6a"/></svg><svg class="ic" style="left:1365px;top:646px" width="11" height="14"><path d="M1 12.5h8v-7l-4-4-4 4z" fill="#313335" stroke="#6a6a6a"/><path d="M3 8.5h4" stroke="#6a6a6a"/></svg><svg class="ic" style="left:1365px;top:666px" width="11" height="14"><path d="M1 12.5h8v-7l-4-4-4 4z" fill="#313335" stroke="#6a6a6a"/><path d="M3 8.5h4" stroke="#6a6a6a"/></svg><svg class="ic" style="left:1365px;top:686px" width="11" height="14"><path d="M1 12.5h8v-7l-4-4-4 4z" fill="#313335" stroke="#6a6a6a"/><path d="M3 8.5h4" stroke="#6a6a6a"/></svg><svg class="ic" style="left:1365px;top:706px" width="11" height="14"><path d="M1 12.5h8v-7l-4-4-4 4z" fill="#313335" stroke="#6a6a6a"/><path d="M3 8.5h4" stroke="#6a6a6a"/></svg><svg class="ic" style="left:1365px;top:726px" width="11" height="14"><path d="M1 1.5h8v7l-4 4-4-4z" fill="#313335" stroke="#6a6a6a"/><path d="M3 5.5h4" stroke="#6a6a6a"/></svg><svg class="ic" style="left:1365px;top:746px" width="11" height="14"><path d="M1 1.5h8v7l-4 4-4-4z" fill="#313335" stroke="#6a6a6a"/><path d="M3 5.5h4" stroke="#6a6a6a"/></svg><svg class="ic" style="left:1365px;top:786px" width="11" height="14"><path d="M1 12.5h8v-7l-4-4-4 4z" fill="#313335" stroke="#6a6a6a"/><path d="M3 8.5h4" stroke="#6a6a6a"/></svg><svg class="ic" style="left:1365px;top:806px" width="11" height="14"><path d="M1 12.5h8v-7l-4-4-4 4z" fill="#313335" stroke="#6a6a6a"/><path d="M3 8.5h4" stroke="#6a6a6a"/></svg><div class="lno" style="left:1292px;top:104px;width:27px">324</div><div class="cl" style="left:1376.4px;top:104px">            <span style="color:#a9b7c6">}</span></div><div class="lno" style="left:1292px;top:124px;width:27px">325</div><div class="cl" style="left:1376.4px;top:124px">        <span style="color:#a9b7c6">})</span><span style="color:#cc7832">;</span></div><div class="lno" style="left:1292px;top:144px;width:27px">326</div><div class="lno" style="left:1292px;top:164px;width:27px">327</div><div class="cl" style="left:1376.4px;top:164px">        <span style="color:#a9b7c6">calendar.render()</span><span style="color:#cc7832">;</span></div><div class="lno" style="left:1292px;top:184px;width:27px">328</div><div class="cl" style="left:1376.4px;top:184px">    <span style="color:#a9b7c6">})</span><span style="color:#cc7832">;</span></div><div class="lno" style="left:1292px;top:204px;width:27px">329</div><div class="cl" style="left:1376.4px;top:204px"><span style="color:#e8bf6a">&lt;/script&gt;</span></div><div class="lno" style="left:1292px;top:224px;width:27px">330</div><div class="cl" style="left:1376.4px;top:224px"><span style="color:#e8bf6a">&lt;script&gt;</span></div><div class="lno" style="left:1292px;top:244px;width:27px">331</div><div class="cl" style="left:1376.4px;top:244px">    <span style="color:#808080">//Add added booking to databas</span></div><div class="lno" style="left:1292px;top:264px;width:27px">332</div><div class="lno" style="left:1292px;top:284px;width:27px">333</div><div class="cl" style="left:1376.4px;top:284px">    <span style="color:#cc7832">function </span><span style="color:#ffc66d">add_booking_to_database</span><span style="color:#a9b7c6">() {</span></div><div class="lno" style="left:1292px;top:304px;width:27px">334</div><div class="lno" style="left:1292px;top:324px;width:27px">335</div><div class="cl" style="left:1376.4px;top:324px">        <span class="wv" style="color:#cc7832">var</span><span style="color:#a9b7c6"> title = </span><span class="wv" style="color:#a9b7c6">$</span><span style="color:#a9b7c6">(</span><span style="color:#6a8759">'</span><span style="color:#a5c261;background:#32402f">#reason</span><span style="color:#6a8759">'</span><span style="color:#a9b7c6">).</span><span class="wv" style="color:#a9b7c6">attr</span><span style="color:#a9b7c6">(</span><span style="color:#6a8759">"name"</span><span style="color:#a9b7c6">)</span><span style="color:#cc7832">;</span></div><div class="lno" style="left:1292px;top:344px;width:27px">336</div><div class="cl" style="left:1376.4px;top:344px">        <span class="wv" style="color:#cc7832">var</span><span style="color:#a9b7c6"> start = </span><span class="wv" style="color:#a9b7c6">$</span><span style="color:#a9b7c6">(</span><span style="color:#6a8759">'</span><span style="color:#a5c261;background:#32402f">#start_time</span><span style="color:#6a8759">'</span><span style="color:#a9b7c6">).</span><span class="wv" style="color:#a9b7c6">attr</span><span style="color:#a9b7c6">(</span><span style="color:#6a8759">"name"</span><span style="color:#a9b7c6">)</span><span style="color:#cc7832">;</span></div><div class="lno" style="left:1292px;top:364px;width:27px">337</div><div class="cl" style="left:1376.4px;top:364px">        <span class="wv" style="color:#cc7832">var</span><span style="color:#a9b7c6"> end = </span><span class="wv" style="color:#a9b7c6">$</span><span style="color:#a9b7c6">(</span><span style="color:#6a8759">'</span><span style="color:#a5c261;background:#32402f">#end_time</span><span style="color:#6a8759">'</span><span style="color:#a9b7c6">).</span><span class="wv" style="color:#a9b7c6">attr</span><span style="color:#a9b7c6">(</span><span style="color:#6a8759">"name"</span><span style="color:#a9b7c6">)</span><span style="color:#cc7832">;</span></div><div class="lno" style="left:1292px;top:384px;width:27px">338</div><div class="lno" style="left:1292px;top:404px;width:27px">339</div><div class="cl" style="left:1376.4px;top:404px">        <span style="color:#808080">//alert(title + '\n' + start + '\n' + end);</span></div><div class="lno" style="left:1292px;top:424px;width:27px">340</div><div class="lno" style="left:1292px;top:444px;width:27px">341</div><div class="cl" style="left:1376.4px;top:444px">        <span class="wv" style="color:#a9b7c6">$</span><span style="color:#a9b7c6">.</span><span class="wv" style="color:#a9b7c6">ajax</span><span style="color:#a9b7c6">({</span></div><div class="lno" style="left:1292px;top:464px;width:27px">342</div><div class="cl" style="left:1376.4px;top:464px">            <span style="color:#9876aa">url</span><span style="color:#a9b7c6">:</span><span style="color:#6a8759">'actions/addBookingToDatabase.php'</span><span style="color:#cc7832">,</span></div><div class="lno" style="left:1292px;top:484px;width:27px">343</div><div class="cl" style="left:1376.4px;top:484px">            <span style="color:#9876aa">method</span><span style="color:#a9b7c6">:</span><span style="color:#6a8759">'POST'</span><span style="color:#cc7832">,</span></div><div class="lno" style="left:1292px;top:504px;width:27px">344</div><div class="cl" style="left:1376.4px;top:504px">            <span style="color:#9876aa">data</span><span style="color:#a9b7c6">:{</span></div><div class="lno" style="left:1292px;top:524px;width:27px">345</div><div class="cl" style="left:1376.4px;top:524px">                <span style="color:#9876aa">title</span><span style="color:#a9b7c6">:title</span><span style="color:#cc7832">,</span></div><div class="lno" style="left:1292px;top:544px;width:27px">346</div><div class="cl" style="left:1376.4px;top:544px">                <span style="color:#9876aa">start</span><span style="color:#a9b7c6">:start</span><span style="color:#cc7832">,</span></div><div class="lno" style="left:1292px;top:564px;width:27px">347</div><div class="cl" style="left:1376.4px;top:564px">                <span style="color:#9876aa">end</span><span style="color:#a9b7c6">:end</span><span style="color:#cc7832">,</span></div><div class="lno" style="left:1292px;top:584px;width:27px">348</div><div class="cl" style="left:1376.4px;top:584px">            <span style="color:#a9b7c6">}</span><span style="color:#cc7832">,</span></div><div class="lno" style="left:1292px;top:604px;width:27px;color:#a4a3a3">349</div><div class="cl" style="left:1376.4px;top:604px">            <span style="color:#e6dcb4">success</span><span style="color:#a9b7c6">:</span><span style="color:#cc7832">function</span><span style="color:#a9b7c6">(data){</span></div><div class="lno" style="left:1292px;top:624px;width:27px">350</div><div class="cl" style="left:1376.4px;top:624px">                <i style="color:#9876aa">console</i><span style="color:#a9b7c6">.</span><span style="color:#ffc66d">log</span><span style="color:#a9b7c6">(data)</span><span style="color:#cc7832">;</span></div><div class="lno" style="left:1292px;top:644px;width:27px">351</div><div class="cl" style="left:1376.4px;top:644px">            <span style="color:#a9b7c6">}</span></div><div class="lno" style="left:1292px;top:664px;width:27px">352</div><div class="cl" style="left:1376.4px;top:664px">        <span style="color:#a9b7c6">})</span><span style="color:#cc7832">;</span></div><div class="lno" style="left:1292px;top:684px;width:27px">353</div><div class="cl" style="left:1376.4px;top:684px">    <span style="color:#a9b7c6">}</span></div><div class="lno" style="left:1292px;top:704px;width:27px">354</div><div class="cl" style="left:1376.4px;top:704px"><span style="color:#e8bf6a">&lt;/script&gt;</span></div><div class="lno" style="left:1292px;top:724px;width:27px">355</div><div class="cl" style="left:1376.4px;top:724px"><span style="color:#e8bf6a">&lt;script&gt;</span></div><div class="lno" style="left:1292px;top:744px;width:27px">356</div><div class="cl" style="left:1376.4px;top:744px">    <i style="color:#9876aa">window</i><span style="color:#a9b7c6">.</span><span style="color:#9876aa">onload </span><span style="color:#a9b7c6">= </span><span style="color:#cc7832">function </span><span style="color:#a9b7c6">() {</span></div><div class="lno" style="left:1292px;top:764px;width:27px">357</div><div class="cl" style="left:1376.4px;top:764px">        <i style="color:#9876aa">document</i><span style="color:#a9b7c6">.</span><span style="color:#ffc66d">querySelector</span><span style="color:#a9b7c6">(</span><span style="color:#6a8759">".fc-renderCalendarBtn-button"</span><span style="color:#a9b7c6">).</span><span style="color:#ffc66d">click</span><span style="color:#a9b7c6">()</span><span style="color:#cc7832">;</span></div><div class="lno" style="left:1292px;top:784px;width:27px">358</div><div class="cl" style="left:1376.4px;top:784px">    <span style="color:#a9b7c6">}</span><span style="color:#cc7832">;</span></div><div class="lno" style="left:1292px;top:804px;width:27px">359</div><div class="cl" style="left:1376.4px;top:804px"><span style="color:#e8bf6a">&lt;/script&gt;</span></div><div class="lno" style="left:1292px;top:824px;width:27px">360</div><div class="lno" style="left:1292px;top:844px;width:27px">361</div><div class="cl" style="left:1376.4px;top:844px"><span style="color:#e8bf6a;background:#4a4830">&lt;/body&gt;</span></div><div class="lno" style="left:1292px;top:864px;width:27px">362</div><div class="cl" style="left:1376.4px;top:864px"><span style="color:#e8bf6a;background:#4a4830">&lt;/html&gt;</span></div><div style="left:1376px;top:963px;width:293px;height:9px;background:rgba(90,90,90,0.55);border-radius:2px"></div><div style="left:1888px;top:871px;width:8px;height:98px;background:#4b4b4b;border-radius:1px"></div><div style="left:1886px;top:103px;width:10px;height:10px;background:#c9a02a"></div><div style="left:1885px;top:356px;width:13px;height:2px;background:#7b7460"></div><div style="left:1885px;top:360px;width:13px;height:2px;background:#7b7460"></div><div style="left:1885px;top:373px;width:13px;height:2px;background:#c9a02a"></div><div style="left:1885px;top:402px;width:13px;height:2px;background:#c9a02a"></div><div style="left:1885px;top:431px;width:13px;height:2px;background:#c9a02a"></div><div style="left:1885px;top:464px;width:13px;height:2px;background:#7b7460"></div><div style="left:1885px;top:483px;width:13px;height:7px;background:#c9a02a"></div><div style="left:1885px;top:495px;width:13px;height:5px;background:#7b7460"></div><div style="left:1885px;top:505px;width:13px;height:5px;background:#c9a02a"></div><div style="left:1885px;top:516px;width:13px;height:5px;background:#7b7460"></div><div style="left:1885px;top:528px;width:13px;height:3px;background:#7b7460"></div><div style="left:1885px;top:556px;width:13px;height:2px;background:#7b7460"></div><div style="left:1885px;top:564px;width:13px;height:2px;background:#7b7460"></div><div style="left:1885px;top:591px;width:13px;height:7px;background:#7b7460"></div><div style="left:1885px;top:601px;width:13px;height:5px;background:#7b7460"></div><div style="left:1885px;top:609px;width:13px;height:7px;background:#7b7460"></div><div style="left:1885px;top:667px;width:13px;height:2px;background:#7b7460"></div><div style="left:1885px;top:676px;width:13px;height:2px;background:#7b7460"></div><div style="left:1885px;top:707px;width:13px;height:2px;background:#7b7460"></div><div style="left:1885px;top:723px;width:13px;height:2px;background:#7b7460"></div><div style="left:1885px;top:726px;width:13px;height:2px;background:#7b7460"></div><div style="left:1885px;top:750px;width:13px;height:2px;background:#7b7460"></div><div style="left:1885px;top:832px;width:13px;height:6px;background:#7b7460"></div><div style="left:1885px;top:898px;width:13px;height:2px;background:#7b7460"></div><div style="left:1885px;top:906px;width:13px;height:2px;background:#7b7460"></div><div style="left:1885px;top:958px;width:13px;height:3px;background:#c9a02a"></div><div style="left:1898px;top:74px;width:22px;height:924px;background:#3c3f41;border-left:1px solid #323232;box-sizing:border-box"></div><svg class="ic" style="left:1904px;top:84px" width="12" height="13"><ellipse cx="6" cy="2.5" rx="5.5" ry="2.3" fill="#afb1b3"/><path d="M0.5 4.5q5.5 3 11 0v2q-5.5 3-11 0zM0.5 8.5q5.5 3 11 0v2q-5.5 3-11 0z" fill="#afb1b3"/></svg><div class="t vt2" style="left:1901px;top:101px;color:#bbbbbb;font-size:11px">Database</div><div style="left:294px;top:974px;width:998px;height:24px;background:#2f3133;border-top:1px solid #323232;box-sizing:border-box"></div><div style="left:1292px;top:974px;width:607px;height:24px;background:#2f3133;border-top:1px solid #323232;border-left:1px solid #323232;box-sizing:border-box"></div><div class="t" style="left:366px;top:979px;color:#bbbbbb">main</div><div class="t" style="left:404px;top:978px;color:#606060;font-size:13px">›</div><div class="t" style="left:417px;top:979px;color:#bbbbbb">table.table.table-hover.table-bordered.table-responsive</div><div class="t" style="left:719px;top:978px;color:#606060;font-size:13px">›</div><div class="t" style="left:732px;top:979px;color:#bbbbbb">tbody</div><div class="t" style="left:1380px;top:979px;color:#bbbbbb">script</div><div class="t" style="left:1420px;top:978px;color:#606060;font-size:13px">›</div><div class="t" style="left:1434px;top:979px;color:#bbbbbb">add_booking_to_database()</div><div class="t" style="left:1589px;top:978px;color:#606060;font-size:13px">›</div><div class="t" style="left:1602px;top:979px;color:#bbbbbb">success()</div><div style="left:0px;top:998px;width:1920px;height:21px;background:#3c3f41;border-top:1px solid #323232;box-sizing:border-box"></div><svg class="ic" style="left:33px;top:1004px" width="12" height="11"><rect x="0" y="0" width="12" height="11" fill="#afb1b3"/><path d="M2 2l3 2.5-3 2.5M6 8h4" stroke="#3c3f41" stroke-width="1.3" fill="none"/></svg><div class="t" style="left:49px;top:1002px;color:#bbbbbb">Terminal</div><svg class="ic" style="left:115px;top:1005px" width="11" height="10"><path d="M0 1h2M4 1h7M0 5h2M4 5h7M0 9h2M4 9h7" stroke="#afb1b3" stroke-width="1.5"/></svg><div class="t" style="left:130px;top:1002px;color:#bbbbbb"><u>6</u>: TODO</div><svg class="ic" style="left:1821px;top:1003px" width="14" height="14"><circle cx="7" cy="7" r="6.5" fill="#499c54"/><path d="M6 4l2-1v8" stroke="#fff" stroke-width="1.4" fill="none"/></svg><div class="t" style="left:1838px;top:1002px;color:#bbbbbb">Event Log</div><div style="left:0px;top:1019px;width:1920px;height:21px;background:#3c3f41;border-top:1px solid #323232;box-sizing:border-box"></div><svg class="ic" style="left:6px;top:1024px" width="12" height="12"><path d="M2.5 0.5h9v9h-9z M0.5 2.5v9h9" fill="none" stroke="#afb1b3"/></svg><div class="t" style="left:27px;top:1023px;color:#bbbbbb;font-size:11.8px">Show project in Rich Presence?: Select if this project should be visible. You can change this later at any time under Settings &gt; Tools &gt; Discord &gt; Project // Show &nbsp;&nbsp;Hide (today 19:39)</div><div class="t" style="left:1664px;top:1023px;color:#bbbbbb">210:51</div><div class="t" style="left:1709px;top:1023px;color:#bbbbbb">CRLF</div><div class="t" style="left:1748px;top:1023px;color:#bbbbbb">UTF-8</div><div class="t" style="left:1792px;top:1023px;color:#bbbbbb">4 spaces</div><svg class="ic" style="left:1847px;top:1024px" width="12" height="12"><path d="M2 6V3a3 3 0 0 1 6 0" fill="none" stroke="#afb1b3" stroke-width="1.5"/><rect x="4" y="6" width="8" height="6" fill="#afb1b3"/></svg><svg class="ic" style="left:1872px;top:1023px" width="12" height="13"><path d="M1 5h10M3 5l1-4h4l1 4" fill="#afb1b3" stroke="#afb1b3"/><circle cx="6" cy="8" r="3" fill="#afb1b3"/><path d="M1 13q5-5 10 0" fill="#afb1b3"/></svg><svg class="ic" style="left:1895px;top:1023px" width="14" height="14"><circle cx="5" cy="5" r="3" fill="none" stroke="#afb1b3" stroke-width="2.5"/><path d="M9 9q3-1 3 2 0 1-2 2v1" stroke="#afb1b3" fill="none" stroke-width="1.3"/></svg><div style="left:1920px;top:0px;width:1920px;height:34px;background:#7d58ab"></div><svg class="ic" style="left:1920px;top:0px" width="240" height="34"><path d="M0 34 q8 0 8-8 V8 q0-8 8-8 H217 q8 0 8 8 V26 q0 8 8 8 Z" fill="#fff"/></svg><svg class="ic" style="left:1941px;top:9px" width="16" height="16"><use href="#globeI" fill="#5f6368"/></svg><div class="t" style="left:1964px;top:9px;color:#3c4043;font-size:11.5px">N393SR - SFI</div><svg class="ic" style="left:2125px;top:12px" width="9" height="9"><path d="M0.5 0.5l8 8M8.5 0.5l-8 8" stroke="#3c4043" stroke-width="1.5"/></svg><svg class="ic" style="left:2157px;top:9px" width="16" height="16"><use href="#globeI" fill="#5c4a6e"/></svg><div class="t" style="left:2180px;top:9px;width:155px;overflow:hidden;color:#fff;font-size:11.5px;-webkit-mask-image:linear-gradient(90deg,#000 85%,transparent)">N393SR - SFI</div><svg class="ic" style="left:2341px;top:12px" width="9" height="9"><path d="M0.5 0.5l8 8M8.5 0.5l-8 8" stroke="#fff" stroke-width="1.5"/></svg><div style="left:2361px;top:8px;width:1px;height:19px;background:#b3a0cf"></div><svg class="ic" style="left:2372px;top:8px" width="16" height="17"><path d="M8 0l8 8-8 9-8-9z" fill="#111"/><text x="3" y="11" font-size="7" font-family="Liberation Sans" font-weight="bold" fill="#fff">3F</text><path d="M13 3l2 5" stroke="#3c3" /></svg><div class="t" style="left:2393px;top:9px;width:157px;overflow:hidden;color:#fff;font-size:11.5px;-webkit-mask-image:linear-gradient(90deg,#000 85%,transparent)">MUSIC STARTS HERE - NPO 3FM</div><svg class="ic" style="left:2556px;top:12px" width="9" height="9"><path d="M0.5 0.5l8 8M8.5 0.5l-8 8" stroke="#fff" stroke-width="1.5"/></svg><div style="left:2575px;top:8px;width:1px;height:19px;background:#b3a0cf"></div><svg class="ic" style="left:2587px;top:8px" width="16" height="16"><rect width="16" height="16" fill="#fff"/><circle cx="5" cy="5" r="3" fill="#2a7fb8"/><circle cx="10" cy="10" r="4" fill="#4aa8d8"/></svg><div class="t" style="left:2611px;top:9px;width:154px;overflow:hidden;color:#fff;font-size:11.5px;-webkit-mask-image:linear-gradient(90deg,#000 85%,transparent)">Databases - Plesk Onyx 17.8.11</div><svg class="ic" style="left:2771px;top:12px" width="9" height="9"><path d="M0.5 0.5l8 8M8.5 0.5l-8 8" stroke="#fff" stroke-width="1.5"/></svg><div style="left:2790px;top:8px;width:1px;height:19px;background:#b3a0cf"></div><svg class="ic" style="left:2802px;top:8px" width="16" height="16"><path d="M1 14l4-12 2 12zM6 14l4-13 2 13zM10 14l3-10 3 10z" fill="#f29111"/><rect x="0" y="12" width="16" height="4" fill="#6c78af"/></svg><div class="t" style="left:2826px;top:9px;width:154px;overflow:hidden;color:#fff;font-size:11.5px;-webkit-mask-image:linear-gradient(90deg,#000 85%,transparent)">server007.yourhosting.nl:8443</div><svg class="ic" style="left:2986px;top:12px" width="9" height="9"><path d="M0.5 0.5l8 8M8.5 0.5l-8 8" stroke="#fff" stroke-width="1.5"/></svg><div style="left:3005px;top:8px;width:1px;height:19px;background:#b3a0cf"></div><svg class="ic" style="left:3017px;top:8px" width="16" height="16"><circle cx="11" cy="4" r="2.5" fill="#7b83eb"/><rect x="8" y="7" width="8" height="8" rx="3" fill="#7b83eb"/><rect x="1" y="4" width="9" height="9" fill="#4b53bc"/><text x="3" y="11" font-size="7" font-family="Liberation Sans" font-weight="bold" fill="#fff">T</text></svg><div class="t" style="left:3041px;top:9px;width:154px;overflow:hidden;color:#fff;font-size:11.5px;-webkit-mask-image:linear-gradient(90deg,#000 85%,transparent)">Rico Otto | Microsoft Teams</div><svg class="ic" style="left:3201px;top:12px" width="9" height="9"><path d="M0.5 0.5l8 8M8.5 0.5l-8 8" stroke="#fff" stroke-width="1.5"/></svg><div style="left:3220px;top:8px;width:1px;height:19px;background:#b3a0cf"></div><svg class="ic" style="left:3233px;top:9px" width="16" height="16"><use href="#globeI" fill="#5c4a6e"/></svg><div class="t" style="left:3256px;top:9px;width:154px;overflow:hidden;color:#fff;font-size:11.5px;-webkit-mask-image:linear-gradient(90deg,#000 85%,transparent)">SFI</div><svg class="ic" style="left:3416px;top:12px" width="9" height="9"><path d="M0.5 0.5l8 8M8.5 0.5l-8 8" stroke="#fff" stroke-width="1.5"/></svg><div style="left:3435px;top:8px;width:1px;height:19px;background:#b3a0cf"></div><svg class="ic" style="left:3448px;top:8px" width="14" height="16"><path d="M1 10v5h11v-5" fill="none" stroke="#bcbbbb" stroke-width="1.5"/><path d="M3 12h7M3.5 9.5l7 1.2M4.5 6.5l6.5 2.5M6 3.5l6 4M9 1l4 5.5" stroke="#f48024" stroke-width="1.5"/></svg><div class="t" style="left:3471px;top:9px;width:154px;overflow:hidden;color:#fff;font-size:11.5px;-webkit-mask-image:linear-gradient(90deg,#000 85%,transparent)">javascript - How can I refresh a page</div><svg class="ic" style="left:3631px;top:12px" width="9" height="9"><path d="M0.5 0.5l8 8M8.5 0.5l-8 8" stroke="#fff" stroke-width="1.5"/></svg><div style="left:3650px;top:8px;width:1px;height:19px;background:#b3a0cf"></div><svg class="ic" style="left:3667px;top:11px" width="13" height="13"><path d="M6.5 0v13M0 6.5h13" stroke="#fff" stroke-width="1.8"/></svg><div style="left:3748px;top:11px;width:9px;height:1.5px;background:#fff"></div><svg class="ic" style="left:3773px;top:4px" width="12" height="12"><path d="M0.5 3.5h8v8h-8z M3.5 3.5v-3h8v8h-3" fill="none" stroke="#fff"/></svg><div style="left:3792px;top:0px;width:45px;height:19px;background:#c7504f"></div><svg class="ic" style="left:3809px;top:5px" width="11" height="11"><path d="M0.5 0.5l10 10M10.5 0.5l-10 10" stroke="#fff" stroke-width="1.3"/></svg><div style="left:1920px;top:34px;width:1920px;height:34px;background:#fff"></div><svg class="ic" style="left:1934px;top:44px" width="16" height="16"><path d="M15 8H3M8 2.5L2.5 8 8 13.5" fill="none" stroke="#5f6368" stroke-width="1.8"/></svg><svg class="ic" style="left:1966px;top:44px" width="16" height="16"><path d="M1 8h12M8 2.5L13.5 8 8 13.5" fill="none" stroke="#babcbe" stroke-width="1.8"/></svg><svg class="ic" style="left:1998px;top:44px" width="16" height="16"><path d="M13 8a5.2 5.2 0 1 1-1.6-3.8" fill="none" stroke="#5f6368" stroke-width="1.8"/><path d="M9 1.5h5v5z" fill="#5f6368"/></svg><svg class="ic" style="left:2030px;top:43px" width="17" height="17"><path d="M2 8.5L8.5 2 15 8.5M4 7v8h9V7" fill="none" stroke="#5f6368" stroke-width="1.8"/></svg><div style="left:2060px;top:38px;width:1339px;height:28px;background:#f1f3f4;border-radius:14px"></div><svg class="ic" style="left:2071px;top:45px" width="14" height="14"><circle cx="7" cy="7" r="6" fill="none" stroke="#5f6368" stroke-width="1.4"/><path d="M7 6v4.5M7 3.5v1.3" stroke="#5f6368" stroke-width="1.6"/></svg><div class="t" style="left:2094px;top:44px;color:#202124;font-size:14.5px">localhost<span style="color:#80868b">/geert/logbook.php</span></div><svg class="ic" style="left:3373px;top:44px" width="16" height="16"><path d="M8 1.5l1.9 4.3 4.6.4-3.5 3 1.1 4.5L8 11.3 3.9 13.7 5 9.2 1.5 6.2l4.6-.4z" fill="none" stroke="#5f6368" stroke-width="1.3"/></svg><svg class="ic" style="left:3413px;top:44px" width="16" height="16"><path d="M5 0h6l5 5v6l-5 5H5l-5-5V5z" fill="#c00"/><text x="1.5" y="10.5" font-size="6.5" font-weight="bold" font-family="Liberation Sans" fill="#fff">ABP</text></svg><svg class="ic" style="left:3445px;top:44px" width="16" height="16"><rect x="0" y="0" width="16" height="16" rx="2" fill="#d9342b"/><path d="M3 13l8-8" stroke="#222" stroke-width="2"/><circle cx="12" cy="4" r="2" fill="#ffd64a"/></svg><svg class="ic" style="left:3477px;top:44px" width="16" height="16"><rect x="0" y="1" width="15" height="14" rx="2" fill="#2c7be5"/><path d="M4 4h8v8H7" fill="none" stroke="#fff" stroke-width="2.2"/><path d="M3 12l6-6" stroke="#fff" stroke-width="2"/></svg><svg class="ic" style="left:3509px;top:44px" width="16" height="16"><rect x="0" y="0" width="16" height="16" rx="3" fill="#111"/><circle cx="5" cy="11" r="3" fill="#fff"/><circle cx="11" cy="11" r="3" fill="#fff"/></svg><svg class="ic" style="left:3541px;top:44px" width="16" height="16"><circle cx="8" cy="8" r="7.5" fill="#d8a155"/><circle cx="5" cy="6" r="1" fill="#6b3e1c"/><circle cx="10" cy="5" r="1" fill="#6b3e1c"/><circle cx="9" cy="10" r="1" fill="#6b3e1c"/><circle cx="5" cy="11" r="1" fill="#6b3e1c"/></svg><svg class="ic" style="left:3573px;top:44px" width="16" height="16"><path d="M3 4a6 6 0 1 1-1 6" fill="none" stroke="#a5a5a5" stroke-width="2"/><path d="M1 1v5h5z" fill="#a5a5a5"/><path d="M8 5v4h3" fill="none" stroke="#a5a5a5" stroke-width="1.6"/></svg><svg class="ic" style="left:3605px;top:44px" width="16" height="16"><path d="M8 1h7M4 5h9M0 8h13M4 11h9M8 15h7" stroke="#e34b5b" stroke-width="2"/><path d="M8 1h7M8 15h7" stroke="#3b5bdb" stroke-width="2"/></svg><svg class="ic" style="left:3637px;top:44px" width="16" height="16"><circle cx="8" cy="8" r="6" fill="none" stroke="#8a8a8a" stroke-width="3"/><circle cx="8" cy="8" r="2.5" fill="#8a8a8a"/><path d="M8 0v16M0 8h16M2.5 2.5l11 11M13.5 2.5l-11 11" stroke="#8a8a8a" stroke-width="2"/><circle cx="8" cy="8" r="2" fill="#fff"/></svg><svg class="ic" style="left:3669px;top:44px" width="16" height="16"><path d="M0 2q0-2 2-2h10l4 8-4 8H2q-2 0-2-2z" fill="#3d9ae8"/><text x="2" y="12" font-size="9" font-weight="bold" font-family="Liberation Sans" fill="#fff">FI</text></svg><svg class="ic" style="left:3701px;top:44px" width="16" height="16"><rect x="0" y="0" width="16" height="16" fill="#b83838"/><path d="M2 13h12l-1-6-2 3-2-2-3 4" fill="#fff" opacity="0.6"/></svg><svg class="ic" style="left:3733px;top:44px" width="16" height="16"><rect x="0" y="0" width="16" height="16" rx="2" fill="#d32d27"/><circle cx="4" cy="8" r="1.5" fill="#fff"/><circle cx="8" cy="8" r="1.5" fill="#fff"/><circle cx="12" cy="8" r="1.5" fill="#fff"/></svg><div style="left:3764px;top:45px;width:1px;height:15px;background:#dadce0"></div><svg class="ic" style="left:3777px;top:43px" width="18" height="18"><path d="M2 9a7 7 0 0 1 14 0v6H2z" fill="#6ab04c"/><rect x="5" y="7" width="8" height="6" fill="#333"/><rect x="6" y="9" width="6" height="3" fill="#f5c518"/></svg><svg class="ic" style="left:3816px;top:44px" width="4" height="16"><circle cx="2" cy="2" r="1.6" fill="#5f6368"/><circle cx="2" cy="8" r="1.6" fill="#5f6368"/><circle cx="2" cy="14" r="1.6" fill="#5f6368"/></svg><div style="left:1920px;top:68px;width:1920px;height:34px;background:#fff"></div><div style="left:1920px;top:102px;width:1920px;height:1px;background:#bcbcbc"></div><svg class="ic" style="left:1935px;top:77px" width="14" height="14"><rect x="0" y="0" width="3" height="3" fill="#ea4335"/><rect x="5" y="0" width="3" height="3" fill="#ea4335"/><rect x="10" y="0" width="3" height="3" fill="#ea4335"/><rect x="0" y="5" width="3" height="3" fill="#34a853"/><rect x="5" y="5" width="3" height="3" fill="#4285f4"/><rect x="10" y="5" width="3" height="3" fill="#fbbc04"/><rect x="0" y="10" width="3" height="3" fill="#34a853"/><rect x="5" y="10" width="3" height="3" fill="#fbbc04"/><rect x="10" y="10" width="3" height="3" fill="#fbbc04"/></svg><div class="t" style="left:1958px;top:77px;color:#3c4043;font-size:12px">Apps</div><svg class="ic" style="left:2002px;top:76px" width="16" height="16"><use href="#globeI" fill="#5f6368"/></svg><div class="t" style="left:2025px;top:77px;color:#3c4043;font-size:12px">EduArte</div><svg class="ic" style="left:2086px;top:77px" width="14" height="14"><path d="M12.5 6H7v2.5h3.2A3.6 3.6 0 1 1 9.5 4l1.8-1.8A6.2 6.2 0 1 0 13 7z" fill="#4285f4"/><path d="M1.5 3.8L3.7 5.5A3.6 3.6 0 0 1 9.5 4l1.8-1.8A6.2 6.2 0 0 0 1.5 3.8z" fill="#ea4335"/><path d="M1.5 10.2l2.2-1.7A3.6 3.6 0 0 0 9.8 10l1.9 1.6A6.2 6.2 0 0 1 1.5 10.2z" fill="#34a853"/><path d="M1.5 3.8a6.2 6.2 0 0 0 0 6.4l2.2-1.7a3.6 3.6 0 0 1 0-3z" fill="#fbbc04"/></svg><div class="t" style="left:2108px;top:77px;color:#3c4043;font-size:12px">Google</div><svg class="ic" style="left:2164px;top:76px" width="16" height="16"><use href="#globeI" fill="#5f6368"/></svg><div class="t" style="left:2187px;top:77px;color:#3c4043;font-size:12px">Twitter</div><svg class="ic" style="left:2242px;top:75px" width="13" height="16"><path d="M6.5 4q2-1 4 0 1 1 1.5 2-2 1-1.5 3.5t1.5 2.5q-1 3-2.5 3.5-1 .3-2-.2-1-.5-2 0-1 .5-2 .2-2-1-3-5-.5-4 2-5 1.5-.5 3 .5z M6.5 3.5q0-2.5 2.5-3.5 0 2.5-2.5 3.5z" fill="#8e8e93"/></svg><div class="t" style="left:2264px;top:77px;color:#3c4043;font-size:12px">iCloud</div><svg class="ic" style="left:2316px;top:78px" width="15" height="11"><rect width="15" height="11" rx="3" fill="#f00"/><path d="M6 3l4 2.5-4 2.5z" fill="#fff"/></svg><div class="t" style="left:2339px;top:77px;color:#3c4043;font-size:12px">YouTube</div><svg class="ic" style="left:2402px;top:77px" width="17" height="14"><path d="M1 6l9-5 6 5v7H1z" fill="#f7b52a"/><path d="M1 6h15" stroke="#fff" stroke-width="1"/><circle cx="5" cy="9" r="1" fill="#fff"/><circle cx="11" cy="10" r="1" fill="#fff"/></svg><div class="t" style="left:2426px;top:77px;color:#3c4043;font-size:12px">KaasHosting</div><svg class="ic" style="left:2509px;top:76px" width="16" height="16"><use href="#globeI" fill="#5f6368"/></svg><div class="t" style="left:2532px;top:77px;color:#3c4043;font-size:12px">WHMCS - Uw overz...</div><svg class="ic" style="left:2663px;top:76px" width="16" height="16"><use href="#globeI" fill="#5f6368"/></svg><div class="t" style="left:2686px;top:77px;color:#3c4043;font-size:12px">Leeuwenborgh Mail</div><svg class="ic" style="left:2808px;top:76px" width="16" height="16"><use href="#globeI" fill="#5f6368"/></svg><div class="t" style="left:2831px;top:77px;color:#3c4043;font-size:12px">Google Agenda</div><svg class="ic" style="left:2934px;top:76px" width="16" height="16"><path d="M8 0a8 8 0 0 1 8 8 8 8 0 0 1-8 8H0V8a8 8 0 0 1 8-8z" fill="#23375b"/><text x="2" y="10" font-size="6" font-weight="bold" font-family="Liberation Sans" fill="#fff">pay</text></svg><div class="t" style="left:2958px;top:77px;color:#3c4043;font-size:12px">Pay.nl [Dashboard]</div><svg class="ic" style="left:3075px;top:76px" width="16" height="16"><circle cx="5" cy="5" r="3.5" fill="#777"/><circle cx="11" cy="5" r="3.5" fill="#666"/><path d="M0 15q0-6 5-6t5 6zM6 15q0-6 5-6t5 6z" fill="#777"/></svg><div class="t" style="left:3098px;top:77px;color:#3c4043;font-size:12px">Magister Marit</div><svg class="ic" style="left:3193px;top:75px" width="14" height="17"><path d="M6 0q-4 6-5 9 0 6 6 8 6-2 6-6-2 2-4 1 2-4-3-12z" fill="#154273"/><path d="M4 13l8-4" stroke="#fff" stroke-width="0.7"/></svg><div class="t" style="left:3216px;top:77px;color:#3c4043;font-size:12px">Nieuws | politie.nl</div><svg class="ic" style="left:3327px;top:76px" width="16" height="16"><use href="#globeI" fill="#5f6368"/></svg><div class="t" style="left:3351px;top:77px;color:#3c4043;font-size:12px">Clippy — CSS clip-...</div><svg class="ic" style="left:3480px;top:77px" width="16" height="14"><path d="M5 0h6l5 9h-6z" fill="#ffc107"/><path d="M5 0L0 9l3 5 5-9z" fill="#1ea362"/><path d="M3 14h10l3-5H6z" fill="#4285f4"/></svg><div class="t" style="left:3505px;top:77px;color:#3c4043;font-size:12px">Beroeps Ambulanc...</div><svg class="ic" style="left:3703px;top:77px" width="12" height="14"><path d="M0 1q0-1 1-1h10v14H1q-1 0-1-1z" fill="#f8d775"/><path d="M9 9h3v5H9z" fill="#e6c05c"/></svg><div class="t" style="left:3725px;top:77px;color:#3c4043;font-size:12px">Andere bladwijzers</div><svg class="ic" style="left:3671px;top:80px" width="9" height="8"><path d="M0.5 0.5l3.5 3.5-3.5 3.5M4.5 0.5l3.5 3.5-3.5 3.5" fill="none" stroke="#5f6368" stroke-width="1.6"/></svg><div style="left:3690px;top:76px;width:1px;height:17px;background:#dadce0"></div><div style="left:1920px;top:103px;width:1920px;height:888px;background:#fff"></div><div style="left:2067px;top:103px;width:14px;height:888px;background:linear-gradient(90deg,rgba(0,0,0,0.035),rgba(0,0,0,0))"></div><div class="t" style="left:1973px;top:131px;color:#212529;font-size:32px;transform:scaleX(0.84);transform-origin:0 0;-webkit-text-stroke:0.7px #212529">SFI</div><div style="left:1936px;top:173px;width:116px;height:1px;background:#dedede"></div><svg class="ic" style="left:1951px;top:202px" width="17" height="17" viewBox="0 0 15 15"><rect x="1" y="3" width="12" height="11" rx="1.5" fill="none" stroke="#007bff" stroke-width="1.6"/><rect x="1" y="3" width="12" height="3" fill="#007bff"/><path d="M4 1v3M10 1v3" stroke="#007bff" stroke-width="1.6"/><path d="M3.5 8.5h2M6.5 8.5h2M9.5 8.5h1.5M3.5 11h2M6.5 11h2M9.5 11h1.5" stroke="#007bff" stroke-width="1.2"/></svg><div class="t" style="left:1971px;top:203px;color:#007bff;font-size:15.6px">Bookings</div><svg class="ic" style="left:1953px;top:242px" width="17" height="17" viewBox="0 0 15 15"><path d="M2 1h10v13H2z" fill="#007bff"/><path d="M4 4h6M4 6h6" stroke="#fff" stroke-width="1"/><path d="M2 12h10" stroke="#fff" stroke-width="1"/></svg><div class="t" style="left:1972px;top:243px;color:#007bff;font-size:15.6px">Logbook</div><svg class="ic" style="left:1953px;top:282px" width="17" height="17" viewBox="0 0 15 15"><circle cx="7" cy="8" r="6.5" fill="#007bff"/><path d="M7 4v5" stroke="#fff" stroke-width="2"/><circle cx="7" cy="11.5" r="1.1" fill="#fff"/></svg><div class="t" style="left:1974px;top:283px;color:#007bff;font-size:15.6px">Squawks</div><svg class="ic" style="left:1953px;top:322px" width="17" height="17" viewBox="0 0 15 15"><path d="M1 2v11h13" fill="none" stroke="#007bff" stroke-width="1.6"/><path d="M4 7v5M6.5 9v3M9 5v7M11.5 8v4" stroke="#007bff" stroke-width="1.6"/></svg><div class="t" style="left:1973px;top:323px;color:#007bff;font-size:15.6px">Statistics</div><svg class="ic" style="left:1953px;top:362px" width="17" height="17" viewBox="0 0 15 15"><path d="M15 1L1 7.5l6 1.5 1.5 6z" fill="#007bff"/></svg><div class="t" style="left:1974px;top:363px;color:#007bff;font-size:15.6px">NavData</div><svg class="ic" style="left:1961px;top:402px" width="17" height="17" viewBox="0 0 15 15"><rect x="1" y="2" width="13" height="11" rx="1" fill="#007bff"/><path d="M2.5 6h4.5v2.5H2.5zM8 6h4.5v2.5H8zM2.5 9.5h4.5v2H2.5zM8 9.5h4.5v2H8z" fill="#fff"/></svg><div class="t" style="left:1981px;top:403px;color:#007bff;font-size:15.6px">Charts</div><svg class="ic" style="left:1970px;top:442px" width="17" height="17" viewBox="0 0 15 15"><path d="M2 1h6l4 4v9H2z M8 1v4h4" fill="none" stroke="#007bff" stroke-width="1.4"/></svg><div class="t" style="left:1987px;top:443px;color:#007bff;font-size:15.6px">Files</div><svg class="ic" style="left:1958px;top:482px" width="17" height="17" viewBox="0 0 15 15"><rect x="3" y="1.5" width="12" height="9" rx="1" fill="none" stroke="#007bff" stroke-width="1.5"/><path d="M1 4v9h11" fill="none" stroke="#007bff" stroke-width="1.5"/><path d="M4.5 9l3-3 2 2 2-2 2 3z" fill="#007bff"/></svg><div class="t" style="left:1980px;top:483px;color:#007bff;font-size:15.6px">Photos</div><svg class="ic" style="left:1961px;top:522px" width="17" height="17" viewBox="0 0 15 15"><circle cx="7" cy="4.5" r="3.6" fill="#007bff"/><path d="M0.5 15q0-6 6.5-6t6.5 6z" fill="#007bff"/></svg><div class="t" style="left:1981px;top:523px;color:#007bff;font-size:15.6px">Profile</div><svg class="ic" style="left:1961px;top:562px" width="17" height="17" viewBox="0 0 15 15"><circle cx="7" cy="4.5" r="3.6" fill="#007bff"/><path d="M0.5 15q0-6 6.5-6t6.5 6z" fill="#007bff"/></svg><div class="t" style="left:1980px;top:563px;color:#007bff;font-size:15.6px">Admin</div><svg class="ic" style="left:1958px;top:602px" width="17" height="17" viewBox="0 0 15 15"><path d="M6 3H3v9h3" fill="none" stroke="#007bff" stroke-width="2"/><path d="M6 6h4V3l5 4.5-5 4.5V9H6z" fill="#007bff"/></svg><div class="t" style="left:1979px;top:603px;color:#007bff;font-size:15.6px">Logout</div><div class="t" style="left:2880px;top:121px;color:#212529;font-size:40px;letter-spacing:0.3px;-webkit-text-stroke:0.8px #212529">Logbook</div><div class="t" style="left:2832px;top:167px;color:#212529;font-size:24px;-webkit-text-stroke:0.5px #212529">Fuel Remaining: <span style="color:green;-webkit-text-stroke:0.5px green">54</span> usg</div><div style="left:2075px;top:195px;width:98px;height:38px;background:#007bff;border-radius:4px"></div><div class="t" style="left:2088px;top:207px;color:#fff;font-size:16px">New entry</div><div style="left:2177px;top:195px;width:140px;height:38px;background:#dc3545;border-radius:4px"></div><div class="t" style="left:2190px;top:207px;color:#fff;font-size:15.6px">Reset remaining</div><svg class="ic" style="left:2892px;top:344px" width="14" height="20"><path d="M1 1v15l3.5-3.5 2.5 5.5 2.5-1-2.5-5.5H12z" fill="#fff" stroke="#1b1b2b" stroke-width="1.2" stroke-linejoin="round"/></svg><div style="left:1920px;top:991px;width:1920px;height:49px;background:#fff;border-top:1px solid #c6c6c6;box-sizing:border-box"></div><svg class="ic" style="left:1940px;top:1007px" width="16" height="16"><path d="M0 3h13v12H0z" fill="#f3d66f"/><rect x="4" y="0" width="11" height="13" fill="#fff" stroke="#bbb" stroke-width="0.8"/><path d="M6 4h2M9 4h2M6 6h2M9 6h2M6 8h2M9 8h2" stroke="#d44" stroke-width="1.2"/><path d="M6.5 5h2M9.5 7h2" stroke="#47b" stroke-width="1"/></svg><div class="t" style="left:1969px;top:1010px;color:#3c4043;font-size:12.2px">DSC01055.jpg</div><svg class="ic" style="left:2121px;top:1012px" width="12" height="8"><path d="M1 7l5-5.5L11 7" fill="none" stroke="#5f6368" stroke-width="1.5"/></svg><div style="left:2151px;top:998px;width:1px;height:37px;background:#dadce0"></div><svg class="ic" style="left:2167px;top:1007px" width="16" height="16"><path d="M0 3h13v12H0z" fill="#f3d66f"/><rect x="4" y="0" width="11" height="13" fill="#fff" stroke="#bbb" stroke-width="0.8"/><path d="M6 4h2M9 4h2M6 6h2M9 6h2M6 8h2M9 8h2" stroke="#d44" stroke-width="1.2"/><path d="M6.5 5h2M9.5 7h2" stroke="#47b" stroke-width="1"/></svg><div class="t" style="left:2196px;top:1010px;color:#3c4043;font-size:12.2px">DSC01054.jpg</div><svg class="ic" style="left:2348px;top:1012px" width="12" height="8"><path d="M1 7l5-5.5L11 7" fill="none" stroke="#5f6368" stroke-width="1.5"/></svg><div style="left:2378px;top:998px;width:1px;height:37px;background:#dadce0"></div><svg class="ic" style="left:2394px;top:1007px" width="16" height="16"><path d="M0 3h13v12H0z" fill="#f3d66f"/><rect x="4" y="0" width="11" height="13" fill="#fff" stroke="#bbb" stroke-width="0.8"/><path d="M6 4h2M9 4h2M6 6h2M9 6h2M6 8h2M9 8h2" stroke="#d44" stroke-width="1.2"/><path d="M6.5 5h2M9.5 7h2" stroke="#47b" stroke-width="1"/></svg><div class="t" style="left:2423px;top:1010px;color:#3c4043;font-size:12.2px">DSC01053.jpg</div><svg class="ic" style="left:2575px;top:1012px" width="12" height="8"><path d="M1 7l5-5.5L11 7" fill="none" stroke="#5f6368" stroke-width="1.5"/></svg><div style="left:2605px;top:998px;width:1px;height:37px;background:#dadce0"></div><svg class="ic" style="left:2621px;top:1007px" width="16" height="16"><path d="M0 3h13v12H0z" fill="#f3d66f"/><rect x="4" y="0" width="11" height="13" fill="#fff" stroke="#bbb" stroke-width="0.8"/><path d="M6 4h2M9 4h2M6 6h2M9 6h2M6 8h2M9 8h2" stroke="#d44" stroke-width="1.2"/><path d="M6.5 5h2M9.5 7h2" stroke="#47b" stroke-width="1"/></svg><div class="t" style="left:2650px;top:1010px;color:#3c4043;font-size:12.2px">DSC01052.jpg</div><svg class="ic" style="left:2802px;top:1012px" width="12" height="8"><path d="M1 7l5-5.5L11 7" fill="none" stroke="#5f6368" stroke-width="1.5"/></svg><div style="left:2832px;top:998px;width:1px;height:37px;background:#dadce0"></div><svg class="ic" style="left:2848px;top:1007px" width="16" height="16"><path d="M0 3h13v12H0z" fill="#f3d66f"/><rect x="4" y="0" width="11" height="13" fill="#fff" stroke="#bbb" stroke-width="0.8"/><path d="M6 4h2M9 4h2M6 6h2M9 6h2M6 8h2M9 8h2" stroke="#d44" stroke-width="1.2"/><path d="M6.5 5h2M9.5 7h2" stroke="#47b" stroke-width="1"/></svg><div class="t" style="left:2877px;top:1010px;color:#3c4043;font-size:12.2px">DSC01051.jpg</div><svg class="ic" style="left:3029px;top:1012px" width="12" height="8"><path d="M1 7l5-5.5L11 7" fill="none" stroke="#5f6368" stroke-width="1.5"/></svg><div style="left:3059px;top:998px;width:1px;height:37px;background:#dadce0"></div><svg class="ic" style="left:3075px;top:1007px" width="16" height="16"><path d="M0 3h13v12H0z" fill="#f3d66f"/><rect x="4" y="0" width="11" height="13" fill="#fff" stroke="#bbb" stroke-width="0.8"/><path d="M6 4h2M9 4h2M6 6h2M9 6h2M6 8h2M9 8h2" stroke="#d44" stroke-width="1.2"/><path d="M6.5 5h2M9.5 7h2" stroke="#47b" stroke-width="1"/></svg><div class="t" style="left:3104px;top:1010px;color:#3c4043;font-size:12.2px">DSC01050.jpg</div><svg class="ic" style="left:3256px;top:1012px" width="12" height="8"><path d="M1 7l5-5.5L11 7" fill="none" stroke="#5f6368" stroke-width="1.5"/></svg><div style="left:3286px;top:998px;width:1px;height:37px;background:#dadce0"></div><svg class="ic" style="left:3302px;top:1007px" width="16" height="16"><path d="M0 3h13v12H0z" fill="#f3d66f"/><rect x="4" y="0" width="11" height="13" fill="#fff" stroke="#bbb" stroke-width="0.8"/><path d="M6 4h2M9 4h2M6 6h2M9 6h2M6 8h2M9 8h2" stroke="#d44" stroke-width="1.2"/><path d="M6.5 5h2M9.5 7h2" stroke="#47b" stroke-width="1"/></svg><div class="t" style="left:3331px;top:1010px;color:#3c4043;font-size:12.2px">DSC01049.jpg</div><svg class="ic" style="left:3483px;top:1012px" width="12" height="8"><path d="M1 7l5-5.5L11 7" fill="none" stroke="#5f6368" stroke-width="1.5"/></svg><div style="left:3513px;top:998px;width:1px;height:37px;background:#dadce0"></div><div style="left:3684px;top:1000px;width:120px;height:31px;border:1px solid #dadce0;border-radius:4px;box-sizing:border-box"></div><div class="t" style="left:3699px;top:1008px;color:#3c4043;font-size:12px">Alles weergeven</div><svg class="ic" style="left:3817px;top:1010px" width="11" height="11"><path d="M0.5 0.5l10 10M10.5 0.5l-10 10" stroke="#5f6368" stroke-width="1.6"/></svg><div style="left:0px;top:1040px;width:1920px;height:40px;background:#957565"></div><svg class="ic" style="left:11px;top:1046px" width="28" height="31"><g transform="translate(0,1)"><path d="M1 5l11-1.6V15H1zM13 3.2L27 1v14H13zM1 16h11v11.6L1 26zM13 16h14v14l-14-2z" fill="#fff"/></g></svg><div style="left:52px;top:1041px;width:58px;height:38px;background:#a88b7d;border:1px solid #b49c90;box-sizing:border-box"></div><svg class="ic" style="left:65px;top:1044px" width="32" height="32"><path d="M2 6h10l2 2h14v18H2z" fill="#f5d77a"/><rect x="6" y="4" width="18" height="6" fill="#fff"/><rect x="8" y="5" width="3" height="2" fill="#3c3"/><rect x="14" y="5" width="3" height="2" fill="#e33"/><rect x="19" y="6" width="3" height="2" fill="#39f"/><path d="M5 20h20v10h-5v-5h-10v5H5z" fill="#4ea6e6"/><path d="M2 10h26v4H2z" fill="#fbe59a"/></svg><div style="left:114px;top:1041px;width:53px;height:38px;background:#b8a59c;border:1px solid #e6dcd6;box-sizing:border-box"></div><div style="left:168px;top:1041px;width:5px;height:38px;background:#b8a59c;border:1px solid #e6dcd6;box-sizing:border-box"></div><svg class="ic" style="left:124px;top:1044px" width="32" height="32"><circle cx="16" cy="16" r="15" fill="#db4437"/><path d="M16 16L3 8.5A15 15 0 0 0 9 29.3z" fill="#0f9d58"/><path d="M16 16l-7 13.3A15 15 0 0 0 31 16z" fill="#ffcd40"/><path d="M16 16h15A15 15 0 0 0 30 10H16z" fill="#ffcd40"/><circle cx="16" cy="16" r="7" fill="#fff"/><circle cx="16" cy="16" r="5.5" fill="#4285f4"/></svg><div style="left:176px;top:1041px;width:58px;height:38px;background:linear-gradient(#f2d650,#f0a93a);border:1px solid #f8e08a;box-sizing:border-box"></div><svg class="ic" style="left:189px;top:1044px" width="32" height="32"><ellipse cx="16" cy="16" rx="13.5" ry="15" fill="#d4d4d4" stroke="#7a6a50" stroke-width="0.8"/><ellipse cx="16" cy="16" rx="11" ry="13" fill="none" stroke="#f2f2f2" stroke-width="1.5" opacity="0.7"/><ellipse cx="16" cy="16" rx="6" ry="10.5" fill="#eaa93c" stroke="#8a7a60" stroke-width="0.8"/></svg><svg class="ic" style="left:251px;top:1044px" width="32" height="32"><circle cx="16" cy="16" r="15" fill="#1d4a78"/><path d="M7 17a9 9 0 0 1 18 0" fill="none" stroke="#fff" stroke-width="2.5"/><path d="M10 18q6 4 12 0-1 4-6 4t-6-4z" fill="#fff"/><path d="M22 24q-3 3-7 3" stroke="#fff" stroke-width="1.5" fill="none"/></svg><div style="left:300px;top:1041px;width:58px;height:38px;background:#a88b7d;border:1px solid #b49c90;box-sizing:border-box"></div><svg class="ic" style="left:313px;top:1044px" width="32" height="32"><path d="M16 2a14 14 0 0 1 14 14h-9a5 5 0 0 0-5-5z" fill="#21b531"/><path d="M30 16a14 14 0 0 1-14 14v-9a5 5 0 0 0 5-5z" fill="#f7c700"/><path d="M16 30A14 14 0 0 1 2 16h9a5 5 0 0 0 5 5z" fill="#ee2a2a"/><path d="M2 16A14 14 0 0 1 16 2v9a5 5 0 0 0-5 5z" fill="#3a8df2"/><circle cx="16" cy="16" r="5.5" fill="#a88b7d"/></svg><svg class="ic" style="left:375px;top:1044px" width="32" height="32"><circle cx="16" cy="16" r="15" fill="#fff"/><path d="M12 7v8M20 17v8M7 20h8M17 12h8" stroke="#e01e5a" stroke-width="3.5" stroke-linecap="round"/><path d="M20 7v8" stroke="#2eb67d" stroke-width="3.5" stroke-linecap="round"/><path d="M12 17v8" stroke="#ecb22e" stroke-width="3.5" stroke-linecap="round"/><path d="M7 12h8" stroke="#36c5f0" stroke-width="3.5" stroke-linecap="round"/><path d="M17 20h8" stroke="#ecb22e" stroke-width="3.5" stroke-linecap="round"/></svg><svg class="ic" style="left:437px;top:1044px" width="32" height="32"><circle cx="16" cy="16" r="15" fill="#302e31" stroke="#fff" stroke-width="1"/><circle cx="16" cy="9" r="5" fill="none" stroke="#c4c2c4" stroke-width="2.2"/><circle cx="10" cy="20" r="5" fill="none" stroke="#c4c2c4" stroke-width="2.2"/><circle cx="22" cy="20" r="5" fill="none" stroke="#c4c2c4" stroke-width="2.2"/></svg><svg class="ic" style="left:499px;top:1044px" width="32" height="32"><rect x="0.5" y="0.5" width="31" height="31" fill="#111" stroke="#17b6e6" stroke-width="1.5"/><rect x="6" y="9" width="20" height="14" fill="#fff"/><rect x="10" y="11" width="12" height="10" fill="#111"/><path d="M6 12h4M6 15.5h4M6 19h4M22 12h4M22 15.5h4M22 19h4" stroke="#111" stroke-width="1"/></svg><svg class="ic" style="left:561px;top:1044px" width="32" height="32"><rect x="12" y="5" width="18" height="22" fill="#fff" stroke="#2b579a"/><path d="M15 10h12M15 14h12M15 18h12M15 22h12" stroke="#2b579a" stroke-width="1.5"/><path d="M1 4l16-3v30l-16-3z" fill="#2b579a"/><text x="3" y="21" font-size="11" font-weight="bold" font-family="Liberation Sans" fill="#fff">W</text></svg><svg class="ic" style="left:623px;top:1044px" width="32" height="32"><rect x="12" y="5" width="18" height="22" fill="#fff" stroke="#d24726"/><circle cx="22" cy="12" r="5" fill="#d24726"/><path d="M15 20h12M15 23h12" stroke="#d24726" stroke-width="1.5"/><path d="M1 4l16-3v30l-16-3z" fill="#d24726"/><text x="4" y="21" font-size="12" font-weight="bold" font-family="Liberation Sans" fill="#fff">P</text></svg><svg class="ic" style="left:685px;top:1044px" width="32" height="32"><rect x="13" y="8" width="18" height="16" fill="#fff" stroke="#0072c6"/><path d="M13 9l9 8 9-8" fill="none" stroke="#0072c6" stroke-width="2"/><path d="M1 4l16-3v30l-16-3z" fill="#0072c6"/><ellipse cx="9" cy="16" rx="4.5" ry="6" fill="none" stroke="#fff" stroke-width="2.5"/></svg><svg class="ic" style="left:747px;top:1044px" width="32" height="32"><circle cx="16" cy="16" r="15" fill="#1b2f5a"/><circle cx="21" cy="11" r="5" fill="none" stroke="#fff" stroke-width="2.5"/><path d="M1 19l8 3 8-7" fill="none" stroke="#fff" stroke-width="3"/><circle cx="10" cy="22" r="3" fill="#fff"/></svg><svg class="ic" style="left:809px;top:1044px" width="32" height="32"><path d="M2 1h8l-8 8z" fill="#1e73d8"/><rect x="8" y="14" width="16" height="14" fill="#6b6b6b"/><path d="M11 14V9a5 5 0 0 1 10 0v5" fill="none" stroke="#888" stroke-width="3"/><path d="M30 31h-9l9-9z" fill="#1dbb3a"/></svg><svg class="ic" style="left:871px;top:1044px" width="32" height="32"><path d="M16 1l8 8-8 8-8-8z" fill="#e45a5a"/><path d="M24 9l7 7-7 7-8-8z" fill="#6ec25a"/><path d="M8 9l8 7-8 7-7-7z" fill="#4a9ae8"/><path d="M16 17l8 6-8 8-8-8z" fill="#f0cd54"/><circle cx="18" cy="14" r="3" fill="#333" opacity="0.5"/></svg><svg class="ic" style="left:933px;top:1044px" width="32" height="32"><rect x="1" y="3" width="30" height="26" rx="7" fill="#7289da"/><path d="M8 10q8-4 16 0 3 6 2 12-3 2-5 2l-1-2q-4 1-8 0l-1 2q-2 0-5-2-1-6 2-12z" fill="#fff"/><circle cx="12.5" cy="17" r="2" fill="#7289da"/><circle cx="19.5" cy="17" r="2" fill="#7289da"/></svg><svg class="ic" style="left:995px;top:1044px" width="32" height="32"><path d="M3 6l12-4 4 12-12 4z" fill="#9be28c"/><path d="M7 10l12-2 2 12-12 2z" fill="#a4d4f5"/><path d="M13 11l13 2-3 14-13-3z" fill="#fce66b"/></svg><div style="left:1044px;top:1041px;width:58px;height:38px;background:#a88b7d;border:1px solid #b49c90;box-sizing:border-box"></div><svg class="ic" style="left:1057px;top:1044px" width="32" height="32"><rect x="1" y="1" width="30" height="30" fill="#bf0000" stroke="#800" stroke-dasharray="1 1"/><path d="M7 27l4-20h12l-1 4h-7l-1 4h6l-1 4h-6l-2 8z" fill="#fff"/><path d="M14 23h10l-1 4H13z" fill="#fff"/></svg><svg class="ic" style="left:1119px;top:1044px" width="32" height="32"><rect x="4" y="4" width="24" height="17" fill="#dfe8ee" stroke="#8a9aa5"/><path d="M6 15l4 0 2-6 3 9 2-5 2 3 3-4 2 3" fill="none" stroke="#2a7fd4" stroke-width="1.2"/><path d="M12 21h8l2 6H10z" fill="#c7ced3"/><ellipse cx="16" cy="28" rx="7" ry="2" fill="#aab"/></svg><svg class="ic" style="left:1181px;top:1044px" width="32" height="32"><circle cx="16" cy="15" r="13.5" fill="#2bb741" stroke="#fff" stroke-width="2"/><path d="M3 30l2-7 5 4z" fill="#fff"/><path d="M10 10q1-2 2 0l1 3q0 1-1 2 2 4 5 5 1-1 2-1l3 1q2 1 0 2-3 3-8-1-5-4-4-11z" fill="#fff"/></svg><div style="left:1230px;top:1041px;width:58px;height:38px;background:#a88b7d;border:1px solid #b49c90;box-sizing:border-box"></div><svg class="ic" style="left:1243px;top:1044px" width="32" height="32"><circle cx="16" cy="16" r="15" fill="#1ed760"/><path d="M7 11q9-3 18 1M8 16q8-2 15 1M9 21q6-1.5 12 1" fill="none" stroke="#111" stroke-width="2.5" stroke-linecap="round"/></svg><div style="left:1292px;top:1041px;width:58px;height:38px;background:#a88b7d;border:1px solid #b49c90;box-sizing:border-box"></div><svg class="ic" style="left:1305px;top:1044px" width="32" height="32"><rect x="1" y="1" width="30" height="15" fill="#f44"/><rect x="1" y="16" width="30" height="15" fill="#253346"/><text x="2.5" y="12.5" font-size="9" font-weight="bold" font-family="Liberation Sans" fill="#fff">VOICE</text><text x="1.5" y="27" font-size="7.5" font-weight="bold" font-family="Liberation Sans" fill="#ccc">MEETER</text></svg><svg class="ic" style="left:1367px;top:1044px" width="32" height="32"><circle cx="16" cy="16" r="15" fill="#1f1f2b"/><path d="M16 6v13M10 13l6 6 6-6M9 24h14" fill="none" stroke="#fff" stroke-width="3"/></svg><svg class="ic" style="left:1429px;top:1044px" width="32" height="32"><defs><linearGradient id="s4g" x1="0" y1="0" x2="1" y2="1"><stop offset="0" stop-color="#c8d8e8"/><stop offset="0.45" stop-color="#2a5a9a"/><stop offset="1" stop-color="#1e3f80"/></linearGradient></defs><path d="M1.5 3h29L16 30.5z" fill="url(#s4g)" stroke="#a01010" stroke-width="1.6" stroke-linejoin="round"/><text x="9" y="19" font-size="15" font-weight="bold" font-family="Liberation Serif" fill="#f5e83a" stroke="#6a5a00" stroke-width="0.4">S</text><text x="20.5" y="10" font-size="6" font-weight="bold" fill="#f5e83a" font-family="Liberation Sans">4</text></svg><div style="left:1478px;top:1041px;width:58px;height:38px;background:#a88b7d;border:1px solid #b49c90;box-sizing:border-box"></div><svg class="ic" style="left:1491px;top:1044px" width="32" height="32"><path d="M1 7l4-3h19l5 5v5H6z" fill="#8a3a7a"/><path d="M6 9h23v5H6z" fill="#b04aa4"/><path d="M1 7l5 2v5l-5-3z" fill="#d8d8e8"/><path d="M6 15h23v5H6z" fill="#2638d8"/><path d="M1 12l5 3v5l-5-3z" fill="#d8d8e8"/><path d="M6 21h23v5H6z" fill="#20a030"/><path d="M1 18l5 3v5l-5-3z" fill="#d8d8e8"/><path d="M6 14.5h23M6 20.5h23" stroke="#111" stroke-width="1"/><path d="M14 4l6 6v16" fill="none" stroke="#b8782a" stroke-width="2.5"/><rect x="17.5" y="13" width="4" height="6" fill="#ddd" stroke="#444" stroke-width="0.6"/></svg><div style="left:1540px;top:1041px;width:50px;height:38px;background:#a88b7d;border:1px solid #b49c90;box-sizing:border-box"></div><div style="left:1591px;top:1041px;width:7px;height:38px;background:#a88b7d;border:1px solid #b49c90;box-sizing:border-box"></div><svg class="ic" style="left:1550px;top:1044px" width="32" height="32"><path d="M3 5l8-4 10 3 9 2-2 12 2 8-12 4-9-5-4-7z" fill="#a95cf0"/><path d="M3 5l8-4 10 3-7 6z" fill="#f0389c"/><path d="M21 4l9 2-2 12 2 8-8-6z" fill="#8a5cf8"/><rect x="6" y="6" width="20" height="20" fill="#000"/><text x="7.5" y="17" font-size="10.5" font-weight="bold" font-family="Liberation Sans" fill="#fff">PS</text><rect x="8" y="21.5" width="8" height="1.6" fill="#fff"/></svg><svg class="ic" style="left:1727px;top:1056px" width="10" height="6"><path d="M0 6l5-5 5 5z" fill="#fff"/></svg><svg class="ic" style="left:1749px;top:1052px" width="16" height="16"><circle cx="8" cy="8" r="6" fill="none" stroke="#3b8ef0" stroke-width="3"/><path d="M8 2a6 6 0 0 1 6 6" fill="none" stroke="#22b33a" stroke-width="3"/><path d="M14 8a6 6 0 0 1-6 6" fill="none" stroke="#f6c000" stroke-width="3"/><path d="M8 14a6 6 0 0 1-6-6" fill="none" stroke="#ee2c2c" stroke-width="3"/></svg><svg class="ic" style="left:1773px;top:1052px" width="17" height="17"><circle cx="8.5" cy="8.5" r="8" fill="#2cb22c"/><path d="M4 9q4-5 9 0-4 5-9 0z" fill="#111"/></svg><svg class="ic" style="left:1797px;top:1050px" width="17" height="19"><path d="M2 1v17" stroke="#fff" stroke-width="1.5"/><path d="M3 2h10l-2 3 2 3H3z" fill="#fff"/><circle cx="12" cy="14" r="4" fill="#e12"/><path d="M10 12l4 4M14 12l-4 4" stroke="#fff" stroke-width="1.2"/></svg><svg class="ic" style="left:1821px;top:1051px" width="17" height="17"><rect x="5.5" y="3.5" width="10" height="8" fill="none" stroke="#fff" stroke-width="1.3"/><path d="M8 15h5M10.5 11.5v3.5" stroke="#fff" stroke-width="1.3"/><circle cx="3" cy="3" r="2" fill="none" stroke="#fff"/><path d="M3 5v6" stroke="#fff"/></svg><div class="t" style="left:1856px;top:1045px;color:#fff;font-size:12px;width:44px;text-align:center">22:11</div><div class="t" style="left:1846px;top:1061px;color:#fff;font-size:12px;width:64px;text-align:center">13-11-2019</div><div style="left:1920px;top:1040px;width:1920px;height:40px;background:#957565"></div><svg class="ic" style="left:1931px;top:1046px" width="28" height="31"><g transform="translate(0,1)"><path d="M1 5l11-1.6V15H1zM13 3.2L27 1v14H13zM1 16h11v11.6L1 26zM13 16h14v14l-14-2z" fill="#fff"/></g></svg><div style="left:1972px;top:1041px;width:58px;height:38px;background:#a88b7d;border:1px solid #b49c90;box-sizing:border-box"></div><svg class="ic" style="left:1985px;top:1044px" width="32" height="32"><path d="M2 6h10l2 2h14v18H2z" fill="#f5d77a"/><rect x="6" y="4" width="18" height="6" fill="#fff"/><rect x="8" y="5" width="3" height="2" fill="#3c3"/><rect x="14" y="5" width="3" height="2" fill="#e33"/><rect x="19" y="6" width="3" height="2" fill="#39f"/><path d="M5 20h20v10h-5v-5h-10v5H5z" fill="#4ea6e6"/><path d="M2 10h26v4H2z" fill="#fbe59a"/></svg><div style="left:2034px;top:1041px;width:53px;height:38px;background:#b8a59c;border:1px solid #e6dcd6;box-sizing:border-box"></div><div style="left:2088px;top:1041px;width:5px;height:38px;background:#b8a59c;border:1px solid #e6dcd6;box-sizing:border-box"></div><svg class="ic" style="left:2044px;top:1044px" width="32" height="32"><circle cx="16" cy="16" r="15" fill="#db4437"/><path d="M16 16L3 8.5A15 15 0 0 0 9 29.3z" fill="#0f9d58"/><path d="M16 16l-7 13.3A15 15 0 0 0 31 16z" fill="#ffcd40"/><path d="M16 16h15A15 15 0 0 0 30 10H16z" fill="#ffcd40"/><circle cx="16" cy="16" r="7" fill="#fff"/><circle cx="16" cy="16" r="5.5" fill="#4285f4"/></svg><div style="left:2096px;top:1041px;width:58px;height:38px;background:linear-gradient(#f2d650,#f0a93a);border:1px solid #f8e08a;box-sizing:border-box"></div><svg class="ic" style="left:2109px;top:1044px" width="32" height="32"><ellipse cx="16" cy="16" rx="13.5" ry="15" fill="#d4d4d4" stroke="#7a6a50" stroke-width="0.8"/><ellipse cx="16" cy="16" rx="11" ry="13" fill="none" stroke="#f2f2f2" stroke-width="1.5" opacity="0.7"/><ellipse cx="16" cy="16" rx="6" ry="10.5" fill="#eaa93c" stroke="#8a7a60" stroke-width="0.8"/></svg><svg class="ic" style="left:2171px;top:1044px" width="32" height="32"><circle cx="16" cy="16" r="15" fill="#1d4a78"/><path d="M7 17a9 9 0 0 1 18 0" fill="none" stroke="#fff" stroke-width="2.5"/><path d="M10 18q6 4 12 0-1 4-6 4t-6-4z" fill="#fff"/><path d="M22 24q-3 3-7 3" stroke="#fff" stroke-width="1.5" fill="none"/></svg><div style="left:2220px;top:1041px;width:58px;height:38px;background:#a88b7d;border:1px solid #b49c90;box-sizing:border-box"></div><svg class="ic" style="left:2233px;top:1044px" width="32" height="32"><path d="M16 2a14 14 0 0 1 14 14h-9a5 5 0 0 0-5-5z" fill="#21b531"/><path d="M30 16a14 14 0 0 1-14 14v-9a5 5 0 0 0 5-5z" fill="#f7c700"/><path d="M16 30A14 14 0 0 1 2 16h9a5 5 0 0 0 5 5z" fill="#ee2a2a"/><path d="M2 16A14 14 0 0 1 16 2v9a5 5 0 0 0-5 5z" fill="#3a8df2"/><circle cx="16" cy="16" r="5.5" fill="#a88b7d"/></svg><svg class="ic" style="left:2295px;top:1044px" width="32" height="32"><circle cx="16" cy="16" r="15" fill="#fff"/><path d="M12 7v8M20 17v8M7 20h8M17 12h8" stroke="#e01e5a" stroke-width="3.5" stroke-linecap="round"/><path d="M20 7v8" stroke="#2eb67d" stroke-width="3.5" stroke-linecap="round"/><path d="M12 17v8" stroke="#ecb22e" stroke-width="3.5" stroke-linecap="round"/><path d="M7 12h8" stroke="#36c5f0" stroke-width="3.5" stroke-linecap="round"/><path d="M17 20h8" stroke="#ecb22e" stroke-width="3.5" stroke-linecap="round"/></svg><svg class="ic" style="left:2357px;top:1044px" width="32" height="32"><circle cx="16" cy="16" r="15" fill="#302e31" stroke="#fff" stroke-width="1"/><circle cx="16" cy="9" r="5" fill="none" stroke="#c4c2c4" stroke-width="2.2"/><circle cx="10" cy="20" r="5" fill="none" stroke="#c4c2c4" stroke-width="2.2"/><circle cx="22" cy="20" r="5" fill="none" stroke="#c4c2c4" stroke-width="2.2"/></svg><svg class="ic" style="left:2419px;top:1044px" width="32" height="32"><rect x="0.5" y="0.5" width="31" height="31" fill="#111" stroke="#17b6e6" stroke-width="1.5"/><rect x="6" y="9" width="20" height="14" fill="#fff"/><rect x="10" y="11" width="12" height="10" fill="#111"/><path d="M6 12h4M6 15.5h4M6 19h4M22 12h4M22 15.5h4M22 19h4" stroke="#111" stroke-width="1"/></svg><svg class="ic" style="left:2481px;top:1044px" width="32" height="32"><rect x="12" y="5" width="18" height="22" fill="#fff" stroke="#2b579a"/><path d="M15 10h12M15 14h12M15 18h12M15 22h12" stroke="#2b579a" stroke-width="1.5"/><path d="M1 4l16-3v30l-16-3z" fill="#2b579a"/><text x="3" y="21" font-size="11" font-weight="bold" font-family="Liberation Sans" fill="#fff">W</text></svg><svg class="ic" style="left:2543px;top:1044px" width="32" height="32"><rect x="12" y="5" width="18" height="22" fill="#fff" stroke="#d24726"/><circle cx="22" cy="12" r="5" fill="#d24726"/><path d="M15 20h12M15 23h12" stroke="#d24726" stroke-width="1.5"/><path d="M1 4l16-3v30l-16-3z" fill="#d24726"/><text x="4" y="21" font-size="12" font-weight="bold" font-family="Liberation Sans" fill="#fff">P</text></svg><svg class="ic" style="left:2605px;top:1044px" width="32" height="32"><rect x="13" y="8" width="18" height="16" fill="#fff" stroke="#0072c6"/><path d="M13 9l9 8 9-8" fill="none" stroke="#0072c6" stroke-width="2"/><path d="M1 4l16-3v30l-16-3z" fill="#0072c6"/><ellipse cx="9" cy="16" rx="4.5" ry="6" fill="none" stroke="#fff" stroke-width="2.5"/></svg><svg class="ic" style="left:2667px;top:1044px" width="32" height="32"><circle cx="16" cy="16" r="15" fill="#1b2f5a"/><circle cx="21" cy="11" r="5" fill="none" stroke="#fff" stroke-width="2.5"/><path d="M1 19l8 3 8-7" fill="none" stroke="#fff" stroke-width="3"/><circle cx="10" cy="22" r="3" fill="#fff"/></svg><svg class="ic" style="left:2729px;top:1044px" width="32" height="32"><path d="M2 1h8l-8 8z" fill="#1e73d8"/><rect x="8" y="14" width="16" height="14" fill="#6b6b6b"/><path d="M11 14V9a5 5 0 0 1 10 0v5" fill="none" stroke="#888" stroke-width="3"/><path d="M30 31h-9l9-9z" fill="#1dbb3a"/></svg><svg class="ic" style="left:2791px;top:1044px" width="32" height="32"><path d="M16 1l8 8-8 8-8-8z" fill="#e45a5a"/><path d="M24 9l7 7-7 7-8-8z" fill="#6ec25a"/><path d="M8 9l8 7-8 7-7-7z" fill="#4a9ae8"/><path d="M16 17l8 6-8 8-8-8z" fill="#f0cd54"/><circle cx="18" cy="14" r="3" fill="#333" opacity="0.5"/></svg><svg class="ic" style="left:2853px;top:1044px" width="32" height="32"><rect x="1" y="3" width="30" height="26" rx="7" fill="#7289da"/><path d="M8 10q8-4 16 0 3 6 2 12-3 2-5 2l-1-2q-4 1-8 0l-1 2q-2 0-5-2-1-6 2-12z" fill="#fff"/><circle cx="12.5" cy="17" r="2" fill="#7289da"/><circle cx="19.5" cy="17" r="2" fill="#7289da"/></svg><svg class="ic" style="left:2915px;top:1044px" width="32" height="32"><path d="M3 6l12-4 4 12-12 4z" fill="#9be28c"/><path d="M7 10l12-2 2 12-12 2z" fill="#a4d4f5"/><path d="M13 11l13 2-3 14-13-3z" fill="#fce66b"/></svg><div style="left:2964px;top:1041px;width:58px;height:38px;background:#a88b7d;border:1px solid #b49c90;box-sizing:border-box"></div><svg class="ic" style="left:2977px;top:1044px" width="32" height="32"><rect x="1" y="1" width="30" height="30" fill="#bf0000" stroke="#800" stroke-dasharray="1 1"/><path d="M7 27l4-20h12l-1 4h-7l-1 4h6l-1 4h-6l-2 8z" fill="#fff"/><path d="M14 23h10l-1 4H13z" fill="#fff"/></svg><svg class="ic" style="left:3039px;top:1044px" width="32" height="32"><rect x="4" y="4" width="24" height="17" fill="#dfe8ee" stroke="#8a9aa5"/><path d="M6 15l4 0 2-6 3 9 2-5 2 3 3-4 2 3" fill="none" stroke="#2a7fd4" stroke-width="1.2"/><path d="M12 21h8l2 6H10z" fill="#c7ced3"/><ellipse cx="16" cy="28" rx="7" ry="2" fill="#aab"/></svg><svg class="ic" style="left:3101px;top:1044px" width="32" height="32"><circle cx="16" cy="15" r="13.5" fill="#2bb741" stroke="#fff" stroke-width="2"/><path d="M3 30l2-7 5 4z" fill="#fff"/><path d="M10 10q1-2 2 0l1 3q0 1-1 2 2 4 5 5 1-1 2-1l3 1q2 1 0 2-3 3-8-1-5-4-4-11z" fill="#fff"/></svg><div style="left:3150px;top:1041px;width:58px;height:38px;background:#a88b7d;border:1px solid #b49c90;box-sizing:border-box"></div><svg class="ic" style="left:3163px;top:1044px" width="32" height="32"><circle cx="16" cy="16" r="15" fill="#1ed760"/><path d="M7 11q9-3 18 1M8 16q8-2 15 1M9 21q6-1.5 12 1" fill="none" stroke="#111" stroke-width="2.5" stroke-linecap="round"/></svg><div style="left:3212px;top:1041px;width:58px;height:38px;background:#a88b7d;border:1px solid #b49c90;box-sizing:border-box"></div><svg class="ic" style="left:3225px;top:1044px" width="32" height="32"><rect x="1" y="1" width="30" height="15" fill="#f44"/><rect x="1" y="16" width="30" height="15" fill="#253346"/><text x="2.5" y="12.5" font-size="9" font-weight="bold" font-family="Liberation Sans" fill="#fff">VOICE</text><text x="1.5" y="27" font-size="7.5" font-weight="bold" font-family="Liberation Sans" fill="#ccc">MEETER</text></svg><svg class="ic" style="left:3287px;top:1044px" width="32" height="32"><circle cx="16" cy="16" r="15" fill="#1f1f2b"/><path d="M16 6v13M10 13l6 6 6-6M9 24h14" fill="none" stroke="#fff" stroke-width="3"/></svg><svg class="ic" style="left:3349px;top:1044px" width="32" height="32"><defs><linearGradient id="s4g" x1="0" y1="0" x2="1" y2="1"><stop offset="0" stop-color="#c8d8e8"/><stop offset="0.45" stop-color="#2a5a9a"/><stop offset="1" stop-color="#1e3f80"/></linearGradient></defs><path d="M1.5 3h29L16 30.5z" fill="url(#s4g)" stroke="#a01010" stroke-width="1.6" stroke-linejoin="round"/><text x="9" y="19" font-size="15" font-weight="bold" font-family="Liberation Serif" fill="#f5e83a" stroke="#6a5a00" stroke-width="0.4">S</text><text x="20.5" y="10" font-size="6" font-weight="bold" fill="#f5e83a" font-family="Liberation Sans">4</text></svg><div style="left:3398px;top:1041px;width:58px;height:38px;background:#a88b7d;border:1px solid #b49c90;box-sizing:border-box"></div><svg class="ic" style="left:3411px;top:1044px" width="32" height="32"><path d="M1 7l4-3h19l5 5v5H6z" fill="#8a3a7a"/><path d="M6 9h23v5H6z" fill="#b04aa4"/><path d="M1 7l5 2v5l-5-3z" fill="#d8d8e8"/><path d="M6 15h23v5H6z" fill="#2638d8"/><path d="M1 12l5 3v5l-5-3z" fill="#d8d8e8"/><path d="M6 21h23v5H6z" fill="#20a030"/><path d="M1 18l5 3v5l-5-3z" fill="#d8d8e8"/><path d="M6 14.5h23M6 20.5h23" stroke="#111" stroke-width="1"/><path d="M14 4l6 6v16" fill="none" stroke="#b8782a" stroke-width="2.5"/><rect x="17.5" y="13" width="4" height="6" fill="#ddd" stroke="#444" stroke-width="0.6"/></svg><div style="left:3460px;top:1041px;width:50px;height:38px;background:#a88b7d;border:1px solid #b49c90;box-sizing:border-box"></div><div style="left:3511px;top:1041px;width:7px;height:38px;background:#a88b7d;border:1px solid #b49c90;box-sizing:border-box"></div><svg class="ic" style="left:3470px;top:1044px" width="32" height="32"><path d="M3 5l8-4 10 3 9 2-2 12 2 8-12 4-9-5-4-7z" fill="#a95cf0"/><path d="M3 5l8-4 10 3-7 6z" fill="#f0389c"/><path d="M21 4l9 2-2 12 2 8-8-6z" fill="#8a5cf8"/><rect x="6" y="6" width="20" height="20" fill="#000"/><text x="7.5" y="17" font-size="10.5" font-weight="bold" font-family="Liberation Sans" fill="#fff">PS</text><rect x="8" y="21.5" width="8" height="1.6" fill="#fff"/></svg></body></html>
